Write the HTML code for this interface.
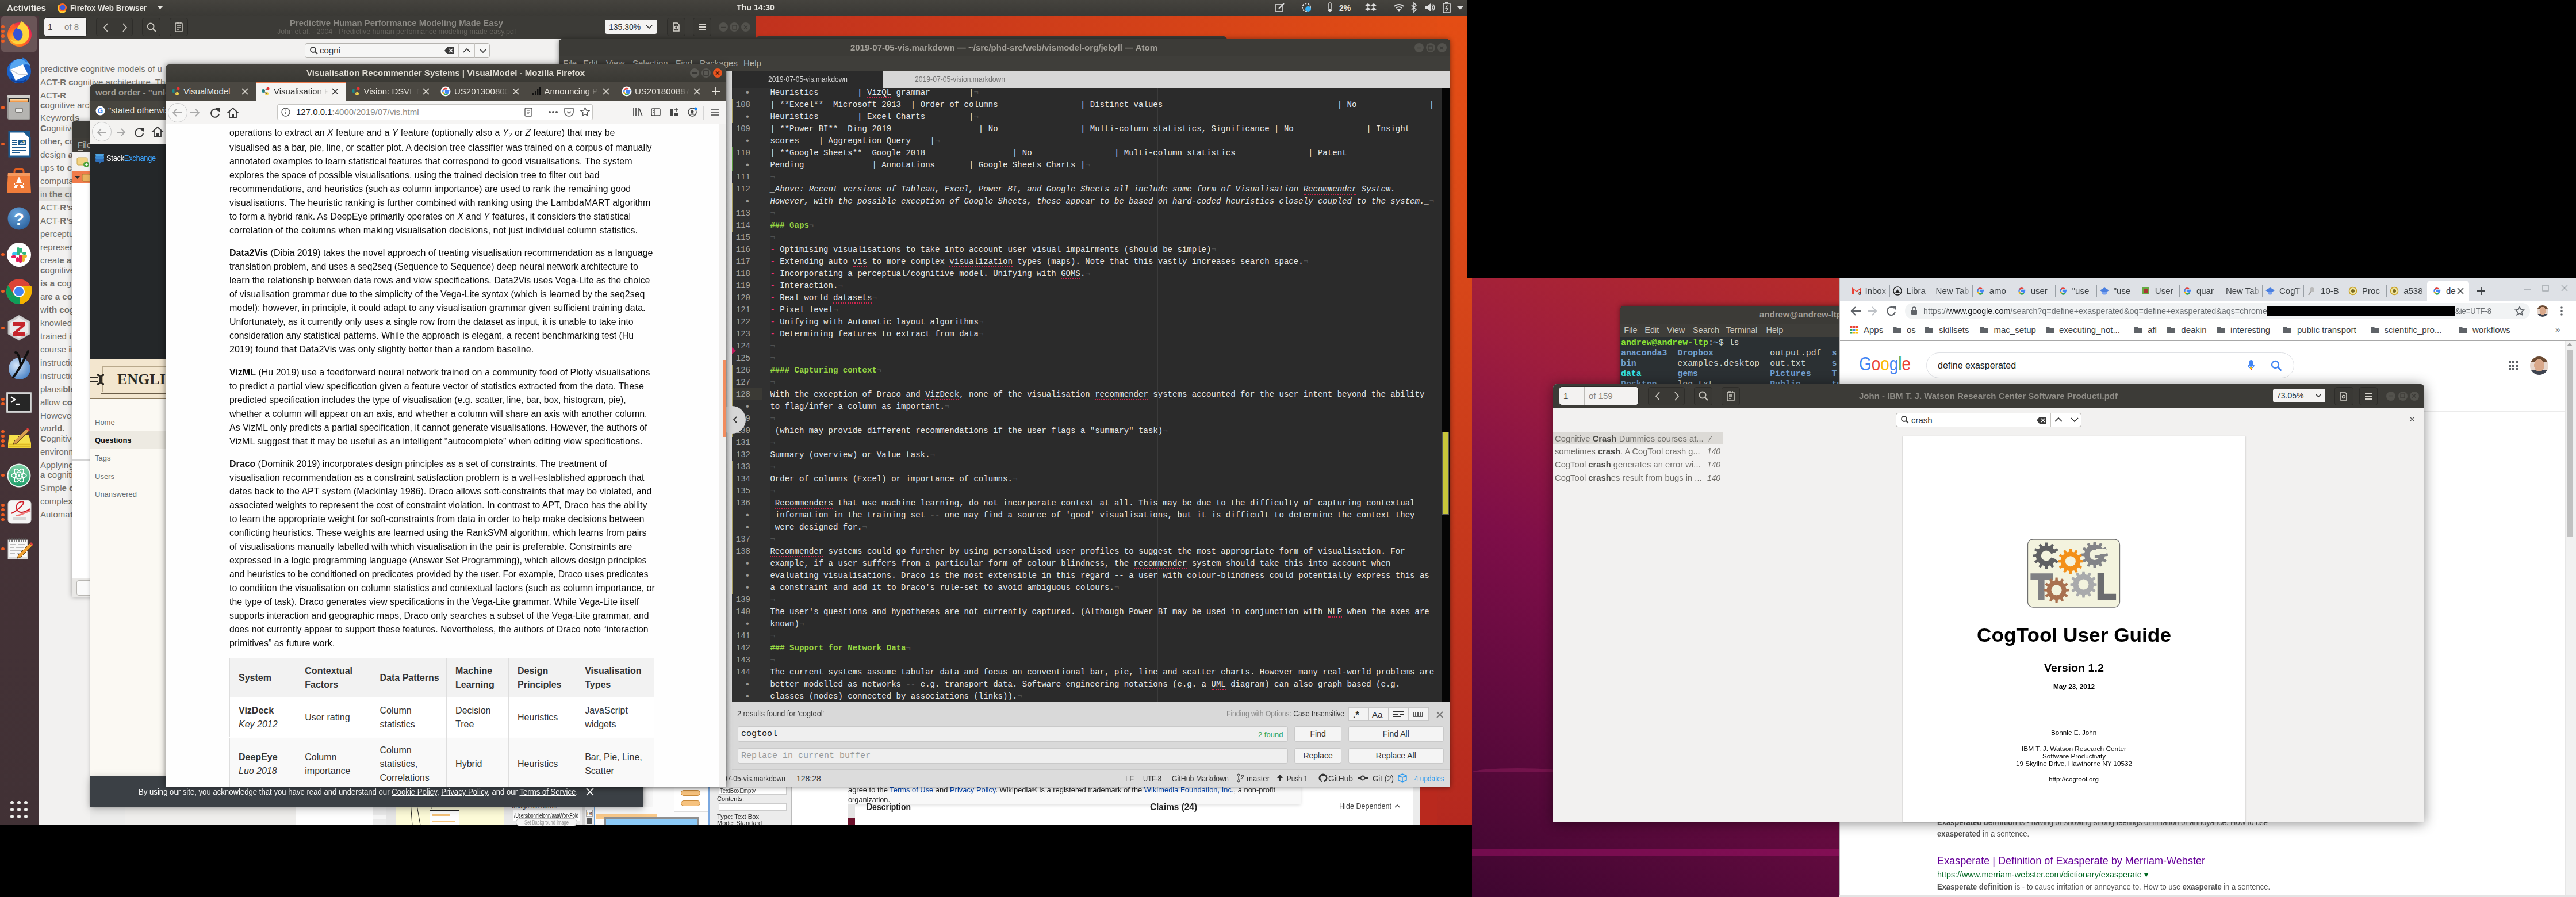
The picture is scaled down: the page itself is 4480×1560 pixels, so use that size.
<!DOCTYPE html><html><head><meta charset="utf-8"><style>*{margin:0;padding:0;box-sizing:border-box}
html,body{width:4480px;height:1560px;overflow:hidden;background:#000}
body{position:relative;font-family:"Liberation Sans",sans-serif}
body div,body svg{position:absolute}
body div span,body div b,body div i,body div em,body div u,body div sub{position:static}
.n{color:#4f4f4f;font-style:normal}
.h{color:#97d543}
.r{color:#f0307a}
sub{font-size:70%;vertical-align:-3px;line-height:0}
</style></head><body><div style="left:0px;top:0px;width:2551px;height:484px;background:linear-gradient(90deg,#b3281f 0%,#c0311e 50%,#e34e14 100%)"></div>
<div style="left:0px;top:484px;width:2560px;height:951px;background:#b9291e"></div>
<div style="left:2500px;top:27px;width:60px;height:1408px;background:linear-gradient(180deg,#e44d14 0%,#dc4a18 25%,#c83a1c 60%,#b5281f 100%)"></div>
<div style="left:2551px;top:0px;width:9px;height:484px;background:#000"></div>
<div style="left:67px;top:27px;width:1247px;height:1408px;background:#f2f1f0"></div>
<div style="left:67px;top:27px;width:1247px;height:40px;background:#3c3b37"></div>
<div style="left:67px;top:67px;width:1247px;height:1px;background:#fbfaf9"></div>
<div style="left:361px;top:107px;width:1px;height:8px;background:#cdcbc7"></div>
<div style="left:76px;top:30px;width:75px;height:34px;background:#f3f2f1;border-radius:5px;border:1px solid #2a2a28"></div>
<div style="left:104px;top:31px;width:1px;height:32px;background:#bdbcb8"></div>
<div style="left:83px;top:37.0px;font-size:15px;line-height:20px;color:#444;font-family:'Liberation Sans', sans-serif;white-space:pre;">1</div>
<div style="left:112px;top:37.0px;font-size:15px;line-height:20px;color:#8a8883;font-family:'Liberation Sans', sans-serif;white-space:pre;">of 8</div>
<div style="left:167px;top:31px;width:64px;height:32px;background:#3a3935;border:1px solid #2e2d2a;border-radius:4px"></div>
<div style="left:247px;top:31px;width:32px;height:32px;background:#3a3935;border:1px solid #2e2d2a;border-radius:4px"></div>
<div style="left:295px;top:31px;width:32px;height:32px;background:#3a3935;border:1px solid #2e2d2a;border-radius:4px"></div>
<svg style="left:176px;top:37px;" width="50" height="22" viewBox="0 0 50 22"><path d="M11 4 L5 11 L11 18" stroke="#c9c6bf" stroke-width="1.8" fill="none"/><path d="M38 4 L44 11 L38 18" stroke="#c9c6bf" stroke-width="1.8" fill="none"/></svg>
<svg style="left:254px;top:38px;" width="20" height="20" viewBox="0 0 20 20"><circle cx="8" cy="8" r="5.5" stroke="#c9c6bf" stroke-width="2" fill="none"/><path d="M12 12 L17 17" stroke="#c9c6bf" stroke-width="2.2"/></svg>
<svg style="left:303px;top:37px;" width="16" height="20" viewBox="0 0 16 20"><rect x="2" y="3" width="12" height="15" rx="1" stroke="#c9c6bf" stroke-width="1.6" fill="none"/><path d="M5 8h6M5 11h6M5 14h4M5 1v3M8 1v3M11 1v3" stroke="#c9c6bf" stroke-width="1.3"/></svg>
<div id="f1" style="left:503.9px;top:29.6px;font-size:15px;line-height:20px;color:#8a8883;font-family:'Liberation Sans', sans-serif;font-weight:bold;transform:scaleX(0.9912);transform-origin:0 0;white-space:pre;">Predictive Human Performance Modeling Made Easy</div>
<div id="f2" style="left:481.7px;top:46.3px;font-size:13.5px;line-height:18px;color:#67655f;font-family:'Liberation Sans', sans-serif;transform:scaleX(0.9231);transform-origin:0 0;white-space:pre;">John et al. - 2004 - Predictive human performance modeling made easy.pdf</div>
<div style="left:1052px;top:34px;width:91px;height:25px;background:#f4f3f2;border-radius:4px"></div>
<div style="left:1059px;top:38.0px;font-size:14px;line-height:18px;color:#333;font-family:'Liberation Sans', sans-serif;white-space:pre;">135.30%</div>
<svg style="left:1122px;top:41px;" width="14" height="12" viewBox="0 0 14 12"><path d="M2 3 L7 8 L12 3" stroke="#333" stroke-width="1.6" fill="none"/></svg>
<div style="left:1160px;top:31px;width:32px;height:32px;background:#3a3935;border:1px solid #2e2d2a;border-radius:4px"></div>
<div style="left:1205px;top:31px;width:32px;height:32px;background:#3a3935;border:1px solid #2e2d2a;border-radius:4px"></div>
<svg style="left:1213px;top:40px;" width="16" height="14" viewBox="0 0 16 14"><path d="M2 2h12M2 7h12M2 12h12" stroke="#d6d3cc" stroke-width="1.8"/></svg>
<svg style="left:1168px;top:38px;" width="16" height="18" viewBox="0 0 16 18"><path d="M3 2h7l3 3v11H3z" stroke="#d6d3cc" stroke-width="1.6" fill="none"/><circle cx="8" cy="10" r="2.5" stroke="#d6d3cc" stroke-width="1.4" fill="none"/></svg>
<div style="left:1250px;top:39px;width:16px;height:16px;border-radius:50%;background:#53524d"></div>
<div style="left:1269px;top:39px;width:16px;height:16px;border-radius:50%;background:#53524d"></div>
<div style="left:1289px;top:39px;width:16px;height:16px;border-radius:50%;background:#53524d"></div>
<svg style="left:1252px;top:41px;" width="52" height="13" viewBox="0 0 52 13"><path d="M2 6.5h8" stroke="#3a3935" stroke-width="1.4"/><rect x="22" y="3" width="7" height="7" stroke="#3a3935" stroke-width="1.2" fill="none"/><path d="M42 3.5l6 6M48 3.5l-6 6" stroke="#3a3935" stroke-width="1.3"/></svg>
<div style="left:530px;top:75px;width:322px;height:26px;background:#f6f6f5;border:1px solid #b6b4b0;border-radius:4px"></div>
<svg style="left:538px;top:80px;" width="16" height="16" viewBox="0 0 16 16"><circle cx="6.5" cy="6.5" r="4.5" stroke="#3a3a3a" stroke-width="1.8" fill="none"/><path d="M10 10 L14 14" stroke="#3a3a3a" stroke-width="2"/></svg>
<div style="left:556px;top:78.0px;font-size:15px;line-height:20px;color:#333;font-family:'Liberation Sans', sans-serif;white-space:pre;">cogni</div>
<svg style="left:773px;top:81px;" width="18" height="14" viewBox="0 0 18 14"><path d="M5 1h12v12H5L0 7z" fill="#3a3a3a"/><path d="M8 4l6 6M14 4l-6 6" stroke="#fff" stroke-width="1.5"/></svg>
<div style="left:797px;top:75px;width:1px;height:26px;background:#c6c4c0"></div>
<div style="left:825px;top:75px;width:1px;height:26px;background:#c6c4c0"></div>
<svg style="left:803px;top:82px;" width="18" height="12" viewBox="0 0 18 12"><path d="M3 9 L9 3 L15 9" stroke="#333" stroke-width="1.7" fill="none"/></svg>
<svg style="left:831px;top:82px;" width="18" height="12" viewBox="0 0 18 12"><path d="M3 3 L9 9 L15 3" stroke="#333" stroke-width="1.7" fill="none"/></svg>
<div style="left:67px;top:326px;width:294px;height:23px;background:#dfdedb"></div>
<div style="left:70px;top:109.8px;font-size:15px;line-height:20px;color:#716f6a;font-family:'Liberation Sans', sans-serif;white-space:pre;">predict<b>ive c</b>ognitive models of u</div>
<div style="left:70px;top:132.6px;font-size:15px;line-height:20px;color:#716f6a;font-family:'Liberation Sans', sans-serif;white-space:pre;">AC<b>T-R c</b>ognitive architecture. The</div>
<div style="left:70px;top:155.5px;font-size:15px;line-height:20px;color:#716f6a;font-family:'Liberation Sans', sans-serif;white-space:pre;">AC<b>T-R</b></div>
<div style="left:70px;top:172.9px;font-size:15px;line-height:20px;color:#716f6a;font-family:'Liberation Sans', sans-serif;white-space:pre;"><b>c</b>ognitive architecture</div>
<div style="left:70px;top:195.2px;font-size:15px;line-height:20px;color:#716f6a;font-family:'Liberation Sans', sans-serif;white-space:pre;">Keywo<b>rds</b></div>
<div style="left:70px;top:212.6px;font-size:15px;line-height:20px;color:#716f6a;font-family:'Liberation Sans', sans-serif;white-space:pre;"><b>C</b>ognitive</div>
<div style="left:70px;top:235.5px;font-size:15px;line-height:20px;color:#716f6a;font-family:'Liberation Sans', sans-serif;white-space:pre;">oth<b>er, c</b>ognitive</div>
<div style="left:70px;top:258.8px;font-size:15px;line-height:20px;color:#716f6a;font-family:'Liberation Sans', sans-serif;white-space:pre;">design <b>a</b>nd</div>
<div style="left:70px;top:281.7px;font-size:15px;line-height:20px;color:#716f6a;font-family:'Liberation Sans', sans-serif;white-space:pre;">ups <b>to c</b>ognitive</div>
<div style="left:70px;top:304.5px;font-size:15px;line-height:20px;color:#716f6a;font-family:'Liberation Sans', sans-serif;white-space:pre;">computational</div>
<div style="left:70px;top:327.9px;font-size:15px;line-height:20px;color:#716f6a;font-family:'Liberation Sans', sans-serif;white-space:pre;">in <b>the c</b>ognitive</div>
<div style="left:70px;top:350.7px;font-size:15px;line-height:20px;color:#716f6a;font-family:'Liberation Sans', sans-serif;white-space:pre;">ACT-<b>R’s c</b>ognitive</div>
<div style="left:70px;top:373.6px;font-size:15px;line-height:20px;color:#716f6a;font-family:'Liberation Sans', sans-serif;white-space:pre;">ACT-<b>R’s c</b>ognitive</div>
<div style="left:70px;top:396.5px;font-size:15px;line-height:20px;color:#716f6a;font-family:'Liberation Sans', sans-serif;white-space:pre;">perceptual</div>
<div style="left:70px;top:419.8px;font-size:15px;line-height:20px;color:#716f6a;font-family:'Liberation Sans', sans-serif;white-space:pre;">represe<b>nt c</b>ognitive</div>
<div style="left:70px;top:442.7px;font-size:15px;line-height:20px;color:#716f6a;font-family:'Liberation Sans', sans-serif;white-space:pre;">creat<b>e a</b></div>
<div style="left:70px;top:460.0px;font-size:15px;line-height:20px;color:#716f6a;font-family:'Liberation Sans', sans-serif;white-space:pre;"><b>c</b>ognitive</div>
<div style="left:70px;top:482.9px;font-size:15px;line-height:20px;color:#716f6a;font-family:'Liberation Sans', sans-serif;white-space:pre;"><b>is a c</b>ognitive</div>
<div style="left:70px;top:505.8px;font-size:15px;line-height:20px;color:#716f6a;font-family:'Liberation Sans', sans-serif;white-space:pre;">ar<b>e a co</b>gnitive</div>
<div style="left:70px;top:528.6px;font-size:15px;line-height:20px;color:#716f6a;font-family:'Liberation Sans', sans-serif;white-space:pre;">w<b>ith co</b>gnitive</div>
<div style="left:70px;top:551.5px;font-size:15px;line-height:20px;color:#716f6a;font-family:'Liberation Sans', sans-serif;white-space:pre;">knowledge</div>
<div style="left:70px;top:574.8px;font-size:15px;line-height:20px;color:#716f6a;font-family:'Liberation Sans', sans-serif;white-space:pre;">trained <b>i</b>n</div>
<div style="left:70px;top:597.7px;font-size:15px;line-height:20px;color:#716f6a;font-family:'Liberation Sans', sans-serif;white-space:pre;">course <b>i</b>n</div>
<div style="left:70px;top:620.6px;font-size:15px;line-height:20px;color:#716f6a;font-family:'Liberation Sans', sans-serif;white-space:pre;">instruction</div>
<div style="left:70px;top:643.9px;font-size:15px;line-height:20px;color:#716f6a;font-family:'Liberation Sans', sans-serif;white-space:pre;">instruction</div>
<div style="left:70px;top:666.8px;font-size:15px;line-height:20px;color:#716f6a;font-family:'Liberation Sans', sans-serif;white-space:pre;">plausi<b>bl</b>e</div>
<div style="left:70px;top:689.6px;font-size:15px;line-height:20px;color:#716f6a;font-family:'Liberation Sans', sans-serif;white-space:pre;">allow <b>co</b>gnitive</div>
<div style="left:70px;top:713.0px;font-size:15px;line-height:20px;color:#716f6a;font-family:'Liberation Sans', sans-serif;white-space:pre;">Howeve<b>r</b></div>
<div style="left:70px;top:735.3px;font-size:15px;line-height:20px;color:#716f6a;font-family:'Liberation Sans', sans-serif;white-space:pre;">wo<b>rld.</b></div>
<div style="left:70px;top:753.2px;font-size:15px;line-height:20px;color:#716f6a;font-family:'Liberation Sans', sans-serif;white-space:pre;"><b>C</b>ognitive</div>
<div style="left:70px;top:776.1px;font-size:15px;line-height:20px;color:#716f6a;font-family:'Liberation Sans', sans-serif;white-space:pre;">environment</div>
<div style="left:70px;top:799.0px;font-size:15px;line-height:20px;color:#716f6a;font-family:'Liberation Sans', sans-serif;white-space:pre;">Applyin<b>g</b></div>
<div style="left:70px;top:816.3px;font-size:15px;line-height:20px;color:#716f6a;font-family:'Liberation Sans', sans-serif;white-space:pre;"><b>a c</b>ognitive</div>
<div style="left:70px;top:838.7px;font-size:15px;line-height:20px;color:#716f6a;font-family:'Liberation Sans', sans-serif;white-space:pre;">Simpl<b>e c</b>ognitive</div>
<div style="left:70px;top:862.0px;font-size:15px;line-height:20px;color:#716f6a;font-family:'Liberation Sans', sans-serif;white-space:pre;">comple<b>x</b></div>
<div style="left:70px;top:884.9px;font-size:15px;line-height:20px;color:#716f6a;font-family:'Liberation Sans', sans-serif;white-space:pre;">Automa<b>t</b>ed</div>
<div style="left:1475px;top:1365px;width:995px;height:70px;background:#fff"></div>
<div style="left:2458px;top:1365px;width:12px;height:70px;background:#ececec"></div>
<div style="left:1475px;top:1365px;width:787px;height:33px;background:#f8f8f8;box-shadow:0 2px 6px rgba(0,0,0,.15)"></div>
<div id="f3" style="left:1475px;top:1366px;white-space:pre;font-size:13px;line-height:16px;color:#222;transform:scaleX(0.9929);transform-origin:0 0;">agree to the <span style="color:#0645ad">Terms of Use</span> and <span style="color:#0645ad">Privacy Policy</span>. Wikipedia® is a registered trademark of the <span style="color:#0645ad">Wikimedia Foundation, Inc.</span>, a non-profit</div>
<div id="f4" style="left:1475px;top:1381.5px;font-size:13px;line-height:17px;color:#222;font-family:'Liberation Sans', sans-serif;transform:scaleX(0.9805);transform-origin:0 0;white-space:pre;">organization.</div>
<div style="left:1475px;top:1398px;width:12px;height:24px;background:#e4e4e4"></div>
<div style="left:1475px;top:1422px;width:12px;height:13px;background:#6b0f2a"></div>
<div id="f5" style="left:1506.7px;top:1392.6px;font-size:17px;line-height:22px;color:#222;font-family:'Liberation Sans', sans-serif;font-weight:bold;transform:scaleX(0.8233);transform-origin:0 0;white-space:pre;">Description</div>
<div id="f6" style="left:1999.5px;top:1393.0px;font-size:17px;line-height:22px;color:#222;font-family:'Liberation Sans', sans-serif;font-weight:bold;transform:scaleX(0.9040);transform-origin:0 0;white-space:pre;">Claims (24)</div>
<div id="f7" style="left:2329px;top:1393.0px;font-size:14px;line-height:18px;color:#444;font-family:'Liberation Sans', sans-serif;transform:scaleX(0.8993);transform-origin:0 0;white-space:pre;">Hide Dependent</div>
<svg style="left:2425px;top:1398px;" width="10" height="7" viewBox="0 0 10 7"><path d="M1 6l4-4 4 4" stroke="#444" stroke-width="1.5" fill="none"/></svg>
<div style="left:157px;top:1368px;width:61px;height:67px;background:#ececeb"></div>
<div style="left:218px;top:1368px;width:297px;height:67px;background:#efeeec"></div>
<div style="left:514px;top:1368px;width:1px;height:67px;background:#bdbdbd"></div>
<div style="left:515px;top:1368px;width:134px;height:67px;background:#fefefe"></div>
<div style="left:649px;top:1368px;width:23px;height:67px;background:#ebebeb"></div>
<div style="left:649px;top:1417px;width:23px;height:8px;background:#f6f6f6;border-top:1px solid #ccc;border-bottom:1px solid #ccc"></div>
<div style="left:672px;top:1368px;width:17px;height:67px;background:#e6e6e6"></div>
<div style="left:689px;top:1368px;width:187px;height:67px;background:#fdfbd8"></div>
<svg style="left:689px;top:1395px;" width="187" height="40" viewBox="0 0 187 40"><path d="M25 0L28 40M35 0L42 40M60 0L61 12" stroke="#222" stroke-width="1"/></svg>
<div style="left:747px;top:1408px;width:52px;height:27px;background:#fff;border:1px solid #555;border-top:3px solid #222"></div>
<div style="left:752px;top:1416px;width:30px;height:3px;background:#f5c27a"></div>
<div style="left:752px;top:1428px;width:40px;height:2px;background:#f5c27a"></div>
<div style="left:876px;top:1368px;width:136px;height:67px;background:#e9e9e9"></div>
<div style="left:890px;top:1395.0px;font-size:11px;line-height:14px;color:#333;font-family:'Liberation Sans', sans-serif;white-space:pre;">Image file name:</div>
<div style="left:892px;top:1408px;width:117px;height:19px;background:#fff"></div>
<div id="f8" style="left:894px;top:1410.5px;font-size:11.5px;line-height:15px;color:#222;font-family:'Liberation Sans', sans-serif;transform:scaleX(0.6826);transform-origin:0 0;white-space:pre;">/Users/bonniejohn/aaaWorkFold</div>
<div style="left:897px;top:1423px;width:107px;height:14px;border:1px solid #bbb;border-radius:7px;background:#f6f6f6"></div>
<div id="f9" style="left:912px;top:1423.5px;font-size:10px;line-height:13px;color:#999;font-family:'Liberation Sans', sans-serif;transform:scaleX(0.7569);transform-origin:0 0;white-space:pre;">Set Background Image</div>
<div style="left:1012px;top:1368px;width:6px;height:67px;background:#d2d2d2"></div>
<div style="left:1018px;top:1368px;width:15px;height:67px;background:#ececec"></div>
<div style="left:1019px;top:1408px;width:12px;height:12px;background:#fff;border:1px solid #aaa"></div>
<div style="left:1020px;top:1409.5px;font-size:7px;line-height:9px;color:#222;font-family:'Liberation Sans', sans-serif;white-space:pre;">Txt</div>
<div style="left:1020px;top:1423px;width:10px;height:10px;background:#555"></div>
<div style="left:1033px;top:1368px;width:2px;height:67px;background:#6aa0d8"></div>
<div style="left:1035px;top:1368px;width:197px;height:67px;background:#fbfbfb"></div>
<div style="left:1035px;top:1368px;width:100px;height:36px;background:linear-gradient(90deg,#f4f4f4,#e6e6e6 50%,#f6f6f6)"></div>
<div style="left:1172px;top:1368px;width:60px;height:44px;background:#fff;border:1px solid #ddd"></div>
<div style="left:1184px;top:1374px;width:34px;height:10px;background:#f6c27e;border-radius:5px;border:1px solid #c98a3a"></div>
<div style="left:1184px;top:1392px;width:34px;height:10px;background:#f6c27e;border-radius:5px;border:1px solid #c98a3a"></div>
<div style="left:1035px;top:1412px;width:197px;height:1px;background:#ccc"></div>
<div style="left:1037px;top:1415px;width:106px;height:9px;background:#f9c98a"></div>
<div style="left:1051px;top:1421px;width:164px;height:14px;background:#8ccaf8;border:3px solid #8f8f8f;border-bottom:0"></div>
<div style="left:1232px;top:1368px;width:2px;height:67px;background:#7aa8e0"></div>
<div style="left:1235px;top:1368px;width:140px;height:67px;background:#ececec"></div>
<div style="left:1250px;top:1368px;width:118px;height:14px;background:#fff;border:1px solid #ccc"></div>
<div id="f10" style="left:1252px;top:1368.0px;font-size:11px;line-height:14px;color:#333;font-family:'Liberation Sans', sans-serif;transform:scaleX(0.8818);transform-origin:0 0;white-space:pre;">TextBoxEmpty</div>
<div id="f11" style="left:1247px;top:1382.0px;font-size:11px;line-height:14px;color:#222;font-family:'Liberation Sans', sans-serif;transform:scaleX(0.9980);transform-origin:0 0;white-space:pre;">Contents:</div>
<div style="left:1250px;top:1397px;width:118px;height:13px;background:#fff;border:1px solid #ccc"></div>
<div id="f12" style="left:1247px;top:1413.0px;font-size:11px;line-height:14px;color:#222;font-family:'Liberation Sans', sans-serif;transform:scaleX(1.0145);transform-origin:0 0;white-space:pre;">Type: Text Box</div>
<div id="f13" style="left:1247px;top:1424.0px;font-size:11px;line-height:14px;color:#222;font-family:'Liberation Sans', sans-serif;transform:scaleX(0.9964);transform-origin:0 0;white-space:pre;">Mode: Standard</div>
<div style="left:1375px;top:1368px;width:2px;height:67px;background:#bbb"></div>
<div style="left:1377px;top:1368px;width:98px;height:67px;background:#fff"></div>
<div style="left:125px;top:210px;width:200px;height:828px;background:#fff;border-radius:6px 6px 0 0;box-shadow:0 0 8px rgba(0,0,0,.35)"></div>
<div style="left:125px;top:210px;width:200px;height:30px;background:#3c3b37;border-radius:6px 6px 0 0"></div>
<div style="left:125px;top:240px;width:200px;height:25px;background:#3f3d38"></div>
<div style="left:135px;top:242.0px;font-size:15px;line-height:20px;color:#bdbab2;font-family:'Liberation Sans', sans-serif;white-space:pre;">File</div>
<div style="left:135px;top:261px;width:9px;height:1px;background:#bdbab2"></div>
<div style="left:125px;top:265px;width:200px;height:33px;background:#f2f1f0"></div>
<svg style="left:133px;top:270px;" width="24" height="22" viewBox="0 0 24 22"><rect x="1" y="4" width="18" height="13" rx="2" fill="#f2d383" stroke="#c9a448"/><circle cx="17" cy="16" r="5" fill="#4ca33c"/><path d="M14 16h6M17 13v6" stroke="#fff" stroke-width="1.6"/></svg>
<div style="left:125px;top:298px;width:200px;height:20px;background:#f07b4b"></div>
<svg style="left:129px;top:302px;" width="30" height="14" viewBox="0 0 30 14"><path d="M1 4h9l-4.5 5z" fill="#2c2c2c"/><rect x="14" y="1" width="14" height="12" rx="2" fill="#e9b15e" stroke="#a7772e"/></svg>
<div style="left:125px;top:799px;width:32px;height:2px;background:#d5d5d5"></div>
<div style="left:125px;top:1005px;width:200px;height:33px;background:#e9e8e6"></div>
<div style="left:133px;top:1009px;width:40px;height:27px;background:#fafafa;border:1px solid #b9b7b3;border-radius:4px"></div>
<div style="left:157px;top:146px;width:962px;height:1257px;background:#fbf9f3;box-shadow:0 0 6px rgba(0,0,0,.25);border-radius:6px 6px 0 0"></div>
<div style="left:157px;top:146px;width:962px;height:30px;background:#3c3b37;border-radius:6px 6px 0 0"></div>
<div style="left:166px;top:151.0px;font-size:15px;line-height:20px;color:#9f9d96;font-family:'Liberation Sans', sans-serif;font-weight:bold;white-space:pre;">word order - &quot;unless stated otherwise&quot;</div>
<div style="left:157px;top:176px;width:962px;height:32px;background:#47453f"></div>
<svg style="left:166px;top:184px;" width="17" height="17" viewBox="0 0 17 17"><circle cx="8.5" cy="8.5" r="8" fill="#fff"/><text x="8.5" y="13" font-size="12" font-weight="bold" text-anchor="middle" fill="#4285f4" font-family="Liberation Sans">G</text></svg>
<div style="left:188px;top:182.0px;font-size:15px;line-height:20px;color:#e6e3dc;font-family:'Liberation Sans', sans-serif;white-space:pre;">&quot;stated otherwise&quot;</div>
<div style="left:157px;top:208px;width:962px;height:42px;background:#f3f2f0"></div>
<div style="left:160px;top:212px;width:34px;height:34px;border-radius:50%;border:1px solid #c8c8c8;background:#f6f6f5"></div>
<svg style="left:167px;top:221px;" width="60" height="18" viewBox="0 0 60 18"><path d="M17 9H4M9 3L3 9l6 6" stroke="#a8a8a8" stroke-width="1.8" fill="none"/><path d="M36 9h14M44 3l6 6-6 6" stroke="#a8a8a8" stroke-width="1.8" fill="none"/></svg>
<svg style="left:232px;top:219px;" width="20" height="20" viewBox="0 0 20 20"><path d="M16 8a7 7 0 1 0 1 5" stroke="#3a3a3a" stroke-width="2" fill="none"/><path d="M11 3h7v7z" fill="#3a3a3a"/></svg>
<svg style="left:263px;top:219px;" width="22" height="22" viewBox="0 0 22 22"><path d="M11 2l9 8h-3v9H5v-9H2z" stroke="#3a3a3a" stroke-width="1.8" fill="none"/><rect x="9" y="13" width="4" height="6" fill="#3a3a3a"/></svg>
<div style="left:157px;top:250px;width:962px;height:374px;background:#242729"></div>
<svg style="left:165px;top:266px;" width="18" height="20" viewBox="0 0 18 20"><rect x="1" y="1" width="15" height="4" rx="1.5" fill="#4fa3e0"/><rect x="1" y="6" width="15" height="4" rx="1" fill="#3a8ad2"/><rect x="1" y="11" width="15" height="4" rx="1" fill="#2f6fb8"/><path d="M8 15l0 4 4-4z" fill="#2f6fb8"/></svg>
<div id="f14" style="left:185px;top:264px;white-space:pre;font-size:15px;line-height:22px;letter-spacing:-0.3px;transform:scaleX(0.8571);transform-origin:0 0;"><span style="color:#fff">Stack</span><span style="color:#3ca4ff">Exchange</span></div>
<div style="left:157px;top:624px;width:962px;height:70px;background:#f3e6cf;border-bottom:2px solid #8d7b5e"></div>
<div style="left:175px;top:634px;width:800px;height:51px;border:1px solid #6b5d48;box-shadow:inset 0 0 0 2px #f3e6cf, inset 0 0 0 3px #b9a98c"></div>
<svg style="left:157px;top:646px;" width="32" height="28" viewBox="0 0 32 28"><path d="M0 11h14M0 17h14" stroke="#2e2a24" stroke-width="2"/><path d="M12 6c4 0 6 3 6 8s-2 8-6 8M24 6c-4 0-6 3-6 8s2 8 6 8" stroke="#2e2a24" stroke-width="3" fill="none"/><circle cx="18" cy="14" r="3" fill="#2e2a24"/></svg>
<div style="left:204px;top:642.5px;font-size:26px;line-height:34px;color:#2e2a24;font-family:'Liberation Serif', serif;font-weight:bold;letter-spacing:5pxwhite-space:pre;">ENGLISH LANGUAGE</div>
<div style="left:157px;top:750px;width:131px;height:31px;background:#edeae2"></div>
<div style="left:165px;top:725.9px;font-size:13px;line-height:17px;color:#6a6a6a;font-family:'Liberation Sans', sans-serif;white-space:pre;">Home</div>
<div style="left:165px;top:757.2px;font-size:13px;line-height:17px;color:#111;font-family:'Liberation Sans', sans-serif;font-weight:bold;white-space:pre;">Questions</div>
<div style="left:165px;top:788.0px;font-size:13px;line-height:17px;color:#6a6a6a;font-family:'Liberation Sans', sans-serif;white-space:pre;">Tags</div>
<div style="left:165px;top:819.8px;font-size:13px;line-height:17px;color:#6a6a6a;font-family:'Liberation Sans', sans-serif;white-space:pre;">Users</div>
<div style="left:165px;top:851.1px;font-size:13px;line-height:17px;color:#6a6a6a;font-family:'Liberation Sans', sans-serif;white-space:pre;">Unanswered</div>
<div style="left:157px;top:1350px;width:962px;height:53px;background:#3b4045;box-shadow:0 4px 14px rgba(0,0,0,.25)"></div>
<div id="f15" style="left:241px;top:1368px;white-space:pre;font-size:14px;line-height:18px;color:#fff;transform:scaleX(0.9395);transform-origin:0 0;">By using our site, you acknowledge that you have read and understand our <u>Cookie Policy</u>, <u>Privacy Policy</u>, and our <u>Terms of Service</u>.</div>
<svg style="left:1018px;top:1369px;" width="16" height="16" viewBox="0 0 16 16"><path d="M2 2l12 12M14 2L2 14" stroke="#fff" stroke-width="2"/></svg>
<div style="left:1314px;top:63px;width:820px;height:8px;background:#3c3b37;border-radius:6px 6px 0 0"></div>
<div style="left:972px;top:68px;width:1550px;height:1301px;background:#2b2b2b;border-radius:6px 6px 0 0;box-shadow:0 0 10px rgba(0,0,0,.45)"></div>
<div style="left:972px;top:68px;width:1550px;height:30px;background:#3c3b37;border-radius:6px 6px 0 0"></div>
<div id="f16" style="left:1479.0px;top:73.0px;font-size:15px;line-height:20px;color:#a29f98;font-family:'Liberation Sans', sans-serif;font-weight:bold;transform:scaleX(0.9996);transform-origin:0 0;white-space:pre;">2019-07-05-vis.markdown — ~/src/phd-src/web/vismodel-org/jekyll — Atom</div>
<div style="left:2460px;top:75px;width:16px;height:16px;border-radius:50%;background:#53524d"></div>
<div style="left:2480px;top:75px;width:16px;height:16px;border-radius:50%;background:#53524d"></div>
<div style="left:2500px;top:75px;width:16px;height:16px;border-radius:50%;background:#53524d"></div>
<svg style="left:2462px;top:77px;" width="52" height="13" viewBox="0 0 52 13"><path d="M2 6.5h8" stroke="#3a3935" stroke-width="1.4"/><rect x="22" y="3" width="7" height="7" stroke="#3a3935" stroke-width="1.2" fill="none"/><path d="M42 3.5l6 6M48 3.5l-6 6" stroke="#3a3935" stroke-width="1.3"/></svg>
<div style="left:972px;top:98px;width:1550px;height:25px;background:#3f3e3a"></div>
<div style="left:979px;top:100.0px;font-size:15px;line-height:20px;color:#b9b6ae;font-family:'Liberation Sans', sans-serif;white-space:pre;">File</div>
<div style="left:1014px;top:100.0px;font-size:15px;line-height:20px;color:#b9b6ae;font-family:'Liberation Sans', sans-serif;white-space:pre;">Edit</div>
<div style="left:1054px;top:100.0px;font-size:15px;line-height:20px;color:#b9b6ae;font-family:'Liberation Sans', sans-serif;white-space:pre;">View</div>
<div style="left:1100px;top:100.0px;font-size:15px;line-height:20px;color:#b9b6ae;font-family:'Liberation Sans', sans-serif;white-space:pre;">Selection</div>
<div style="left:1175px;top:100.0px;font-size:15px;line-height:20px;color:#b9b6ae;font-family:'Liberation Sans', sans-serif;white-space:pre;">Find</div>
<div style="left:1217px;top:100.0px;font-size:15px;line-height:20px;color:#b9b6ae;font-family:'Liberation Sans', sans-serif;white-space:pre;">Packages</div>
<div style="left:1293px;top:100.0px;font-size:15px;line-height:20px;color:#b9b6ae;font-family:'Liberation Sans', sans-serif;white-space:pre;">Help</div>
<div style="left:972px;top:123px;width:1550px;height:30px;background:#d7d7d7"></div>
<div style="left:1273px;top:123px;width:263px;height:30px;background:#2b2b2b"></div>
<div id="f17" style="left:1336.0px;top:129.0px;font-size:13px;line-height:17px;color:#d6d6d6;font-family:'Liberation Sans', sans-serif;transform:scaleX(0.9182);transform-origin:0 0;white-space:pre;">2019-07-05-vis.markdown</div>
<div id="f18" style="left:1590.5px;top:129.0px;font-size:13px;line-height:17px;color:#707070;font-family:'Liberation Sans', sans-serif;transform:scaleX(0.9364);transform-origin:0 0;white-space:pre;">2019-07-05-vision.markdown</div>
<div style="left:1801px;top:123px;width:1px;height:30px;background:#bdbdbd"></div>
<div style="left:1262px;top:123px;width:11px;height:1246px;background:linear-gradient(90deg,#a9a9a9,#d3d3d3 40%,#dcdcdc)"></div>
<div style="left:1273px;top:153px;width:66px;height:1067px;background:#313131"></div>
<div style="left:2507px;top:153px;width:15px;height:1067px;background:#050505"></div>
<div style="left:2508px;top:751px;width:12px;height:144px;background:#c8c63a;border:1px solid #555"></div>
<div style="left:2013px;top:153px;width:1px;height:1067px;background:#3b3b3b"></div>
<div style="left:1273px;top:171.5px;width:2.3px;height:42px;background:#a89e5c"></div>
<div style="left:1273px;top:255.5px;width:2.3px;height:42px;background:#5a9a3c"></div>
<div style="left:1273px;top:318.5px;width:2.3px;height:84px;background:#a89e5c"></div>
<div style="left:1273px;top:633.5px;width:2.3px;height:126px;background:#a89e5c"></div>
<div style="left:1273px;top:801.5px;width:2.3px;height:231px;background:#a89e5c"></div>
<div style="left:1275px;top:674.5px;width:50px;height:21px;background:#3b3a35"></div>
<svg style="left:1273px;top:604px;" width="8" height="12" viewBox="0 0 8 12"><path d="M0 0L7 6L0 12z" fill="#c2185b"/></svg>
<div style="left:0;top:0;font-family:'Liberation Mono',monospace;font-size:14.05px;line-height:21px"><div style="left:1275px;top:150.8px;width:30px;height:21px;color:#9a9a9a;text-align:right;padding-right:0px;font-size:17px">•</div>
<div style="left:1339.4px;top:150.8px;height:21px;color:#e6e6e6;white-space:pre">Heuristics        | VizQL grammar        |<i class="n">¬</i></div>
<div style="left:1270px;top:171.8px;width:35px;height:21px;color:#a3a3a3;text-align:right">108</div>
<div style="left:1339.4px;top:171.8px;height:21px;color:#e6e6e6;white-space:pre">| **Excel** _Microsoft 2013_ | Order of columns                 | Distinct values                                    | No               |</div>
<div style="left:1275px;top:192.8px;width:30px;height:21px;color:#9a9a9a;text-align:right;padding-right:0px;font-size:17px">•</div>
<div style="left:1339.4px;top:192.8px;height:21px;color:#e6e6e6;white-space:pre">Heuristics        | Excel Charts         |<i class="n">¬</i></div>
<div style="left:1270px;top:213.8px;width:35px;height:21px;color:#a3a3a3;text-align:right">109</div>
<div style="left:1339.4px;top:213.8px;height:21px;color:#e6e6e6;white-space:pre">| **Power BI** _Ding 2019_                 | No                 | Multi-column statistics, Significance | No               | Insight</div>
<div style="left:1275px;top:234.8px;width:30px;height:21px;color:#9a9a9a;text-align:right;padding-right:0px;font-size:17px">•</div>
<div style="left:1339.4px;top:234.8px;height:21px;color:#e6e6e6;white-space:pre">scores    | Aggregation Query    |<i class="n">¬</i></div>
<div style="left:1270px;top:255.8px;width:35px;height:21px;color:#a3a3a3;text-align:right">110</div>
<div style="left:1339.4px;top:255.8px;height:21px;color:#e6e6e6;white-space:pre">| **Google Sheets** _Google 2018_                 | No                 | Multi-column statistics               | Patent</div>
<div style="left:1275px;top:276.8px;width:30px;height:21px;color:#9a9a9a;text-align:right;padding-right:0px;font-size:17px">•</div>
<div style="left:1339.4px;top:276.8px;height:21px;color:#e6e6e6;white-space:pre">Pending              | Annotations       | Google Sheets Charts |<i class="n">¬</i></div>
<div style="left:1270px;top:297.8px;width:35px;height:21px;color:#a3a3a3;text-align:right">111</div>
<div style="left:1339.4px;top:297.8px;height:21px;color:#e6e6e6;white-space:pre"><i class="n">¬</i></div>
<div style="left:1270px;top:318.8px;width:35px;height:21px;color:#a3a3a3;text-align:right">112</div>
<div style="left:1339.4px;top:318.8px;height:21px;color:#e6e6e6;white-space:pre"><em>_Above: Recent versions of Tableau, Excel, Power BI, and Google Sheets all include some form of Visualisation Recommender System.</em></div>
<div style="left:1275px;top:339.8px;width:30px;height:21px;color:#9a9a9a;text-align:right;padding-right:0px;font-size:17px">•</div>
<div style="left:1339.4px;top:339.8px;height:21px;color:#e6e6e6;white-space:pre"><em>However, with the possible exception of Google Sheets, these appear to be based on hard-coded heuristics closely coupled to the system._<i class="n">¬</i></em></div>
<div style="left:1270px;top:360.8px;width:35px;height:21px;color:#a3a3a3;text-align:right">113</div>
<div style="left:1339.4px;top:360.8px;height:21px;color:#e6e6e6;white-space:pre"><i class="n">¬</i></div>
<div style="left:1270px;top:381.8px;width:35px;height:21px;color:#a3a3a3;text-align:right">114</div>
<div style="left:1339.4px;top:381.8px;height:21px;color:#e6e6e6;white-space:pre"><b class="h">### Gaps<i class="n">¬</i></b></div>
<div style="left:1270px;top:402.8px;width:35px;height:21px;color:#a3a3a3;text-align:right">115</div>
<div style="left:1339.4px;top:402.8px;height:21px;color:#e6e6e6;white-space:pre"><i class="n">¬</i></div>
<div style="left:1270px;top:423.8px;width:35px;height:21px;color:#a3a3a3;text-align:right">116</div>
<div style="left:1339.4px;top:423.8px;height:21px;color:#e6e6e6;white-space:pre"><span class="r">-</span> Optimising visualisations to take into account user visual impairments (should be simple)<i class="n">¬</i></div>
<div style="left:1270px;top:444.8px;width:35px;height:21px;color:#a3a3a3;text-align:right">117</div>
<div style="left:1339.4px;top:444.8px;height:21px;color:#e6e6e6;white-space:pre"><span class="r">-</span> Extending auto vis to more complex visualization types (maps). Note that this vastly increases search space.<i class="n">¬</i></div>
<div style="left:1270px;top:465.8px;width:35px;height:21px;color:#a3a3a3;text-align:right">118</div>
<div style="left:1339.4px;top:465.8px;height:21px;color:#e6e6e6;white-space:pre"><span class="r">-</span> Incorporating a perceptual/cognitive model. Unifying with GOMS.<i class="n">¬</i></div>
<div style="left:1270px;top:486.8px;width:35px;height:21px;color:#a3a3a3;text-align:right">119</div>
<div style="left:1339.4px;top:486.8px;height:21px;color:#e6e6e6;white-space:pre"><span class="r">-</span> Interaction.<i class="n">¬</i></div>
<div style="left:1270px;top:507.8px;width:35px;height:21px;color:#a3a3a3;text-align:right">120</div>
<div style="left:1339.4px;top:507.8px;height:21px;color:#e6e6e6;white-space:pre"><span class="r">-</span> Real world datasets<i class="n">¬</i></div>
<div style="left:1270px;top:528.8px;width:35px;height:21px;color:#a3a3a3;text-align:right">121</div>
<div style="left:1339.4px;top:528.8px;height:21px;color:#e6e6e6;white-space:pre"><span class="r">-</span> Pixel level<i class="n">¬</i></div>
<div style="left:1270px;top:549.8px;width:35px;height:21px;color:#a3a3a3;text-align:right">122</div>
<div style="left:1339.4px;top:549.8px;height:21px;color:#e6e6e6;white-space:pre"><span class="r">-</span> Unifying with Automatic layout algorithms<i class="n">¬</i></div>
<div style="left:1270px;top:570.8px;width:35px;height:21px;color:#a3a3a3;text-align:right">123</div>
<div style="left:1339.4px;top:570.8px;height:21px;color:#e6e6e6;white-space:pre"><span class="r">-</span> Determining features to extract from data<i class="n">¬</i></div>
<div style="left:1270px;top:591.8px;width:35px;height:21px;color:#a3a3a3;text-align:right">124</div>
<div style="left:1339.4px;top:591.8px;height:21px;color:#e6e6e6;white-space:pre"><i class="n">¬</i></div>
<div style="left:1270px;top:612.8px;width:35px;height:21px;color:#a3a3a3;text-align:right">125</div>
<div style="left:1339.4px;top:612.8px;height:21px;color:#e6e6e6;white-space:pre"><i class="n">¬</i></div>
<div style="left:1270px;top:633.8px;width:35px;height:21px;color:#a3a3a3;text-align:right">126</div>
<div style="left:1339.4px;top:633.8px;height:21px;color:#e6e6e6;white-space:pre"><b class="h">#### Capturing context<i class="n">¬</i></b></div>
<div style="left:1270px;top:654.8px;width:35px;height:21px;color:#a3a3a3;text-align:right">127</div>
<div style="left:1339.4px;top:654.8px;height:21px;color:#e6e6e6;white-space:pre"><i class="n">¬</i></div>
<div style="left:1270px;top:675.8px;width:35px;height:21px;color:#a3a3a3;text-align:right">128</div>
<div style="left:1339.4px;top:675.8px;height:21px;color:#e6e6e6;white-space:pre">With the exception of Draco and VizDeck, none of the visualisation recommender systems accounted for the user intent beyond the ability</div>
<div style="left:1275px;top:696.8px;width:30px;height:21px;color:#9a9a9a;text-align:right;padding-right:0px;font-size:17px">•</div>
<div style="left:1339.4px;top:696.8px;height:21px;color:#e6e6e6;white-space:pre">to flag/infer a column as important.<i class="n">¬</i></div>
<div style="left:1270px;top:717.8px;width:35px;height:21px;color:#a3a3a3;text-align:right">129</div>
<div style="left:1339.4px;top:717.8px;height:21px;color:#e6e6e6;white-space:pre"><i class="n">¬</i></div>
<div style="left:1270px;top:738.8px;width:35px;height:21px;color:#a3a3a3;text-align:right">130</div>
<div style="left:1339.4px;top:738.8px;height:21px;color:#e6e6e6;white-space:pre"> (which may provide different recommendations if the user flags a &quot;summary&quot; task)<i class="n">¬</i></div>
<div style="left:1270px;top:759.8px;width:35px;height:21px;color:#a3a3a3;text-align:right">131</div>
<div style="left:1339.4px;top:759.8px;height:21px;color:#e6e6e6;white-space:pre"><i class="n">¬</i></div>
<div style="left:1270px;top:780.8px;width:35px;height:21px;color:#a3a3a3;text-align:right">132</div>
<div style="left:1339.4px;top:780.8px;height:21px;color:#e6e6e6;white-space:pre">Summary (overview) or Value task.<i class="n">¬</i></div>
<div style="left:1270px;top:801.8px;width:35px;height:21px;color:#a3a3a3;text-align:right">133</div>
<div style="left:1339.4px;top:801.8px;height:21px;color:#e6e6e6;white-space:pre"><i class="n">¬</i></div>
<div style="left:1270px;top:822.8px;width:35px;height:21px;color:#a3a3a3;text-align:right">134</div>
<div style="left:1339.4px;top:822.8px;height:21px;color:#e6e6e6;white-space:pre">Order of columns (Excel) or importance of columns.<i class="n">¬</i></div>
<div style="left:1270px;top:843.8px;width:35px;height:21px;color:#a3a3a3;text-align:right">135</div>
<div style="left:1339.4px;top:843.8px;height:21px;color:#e6e6e6;white-space:pre"><i class="n">¬</i></div>
<div style="left:1270px;top:864.8px;width:35px;height:21px;color:#a3a3a3;text-align:right">136</div>
<div style="left:1339.4px;top:864.8px;height:21px;color:#e6e6e6;white-space:pre"> Recommenders that use machine learning, do not incorporate context at all. This may be due to the difficulty of capturing contextual</div>
<div style="left:1275px;top:885.8px;width:30px;height:21px;color:#9a9a9a;text-align:right;padding-right:0px;font-size:17px">•</div>
<div style="left:1339.4px;top:885.8px;height:21px;color:#e6e6e6;white-space:pre"> information in the training set -- one may find a source of &#x27;good&#x27; visualisations, but it is difficult to determine the context they</div>
<div style="left:1275px;top:906.8px;width:30px;height:21px;color:#9a9a9a;text-align:right;padding-right:0px;font-size:17px">•</div>
<div style="left:1339.4px;top:906.8px;height:21px;color:#e6e6e6;white-space:pre"> were designed for.<i class="n">¬</i></div>
<div style="left:1270px;top:927.8px;width:35px;height:21px;color:#a3a3a3;text-align:right">137</div>
<div style="left:1339.4px;top:927.8px;height:21px;color:#e6e6e6;white-space:pre"><i class="n">¬</i></div>
<div style="left:1270px;top:948.8px;width:35px;height:21px;color:#a3a3a3;text-align:right">138</div>
<div style="left:1339.4px;top:948.8px;height:21px;color:#e6e6e6;white-space:pre">Recommender systems could go further by using personalised user profiles to suggest the most appropriate form of visualisation. For</div>
<div style="left:1275px;top:969.8px;width:30px;height:21px;color:#9a9a9a;text-align:right;padding-right:0px;font-size:17px">•</div>
<div style="left:1339.4px;top:969.8px;height:21px;color:#e6e6e6;white-space:pre">example, if a user suffers from a particular form of colour blindness, the recommender system should take this into account when</div>
<div style="left:1275px;top:990.8px;width:30px;height:21px;color:#9a9a9a;text-align:right;padding-right:0px;font-size:17px">•</div>
<div style="left:1339.4px;top:990.8px;height:21px;color:#e6e6e6;white-space:pre">evaluating visualisations. Draco is the most extensible in this regard -- a user with colour-blindness could potentially express this as</div>
<div style="left:1275px;top:1011.8px;width:30px;height:21px;color:#9a9a9a;text-align:right;padding-right:0px;font-size:17px">•</div>
<div style="left:1339.4px;top:1011.8px;height:21px;color:#e6e6e6;white-space:pre">a constraint and add it to Draco&#x27;s rule-set to avoid ambiguous colours.<i class="n">¬</i></div>
<div style="left:1270px;top:1032.8px;width:35px;height:21px;color:#a3a3a3;text-align:right">139</div>
<div style="left:1339.4px;top:1032.8px;height:21px;color:#e6e6e6;white-space:pre"><i class="n">¬</i></div>
<div style="left:1270px;top:1053.8px;width:35px;height:21px;color:#a3a3a3;text-align:right">140</div>
<div style="left:1339.4px;top:1053.8px;height:21px;color:#e6e6e6;white-space:pre">The user&#x27;s questions and hypotheses are not currently captured. (Although Power BI may be used in conjunction with NLP when the axes are</div>
<div style="left:1275px;top:1074.8px;width:30px;height:21px;color:#9a9a9a;text-align:right;padding-right:0px;font-size:17px">•</div>
<div style="left:1339.4px;top:1074.8px;height:21px;color:#e6e6e6;white-space:pre">known)<i class="n">¬</i></div>
<div style="left:1270px;top:1095.8px;width:35px;height:21px;color:#a3a3a3;text-align:right">141</div>
<div style="left:1339.4px;top:1095.8px;height:21px;color:#e6e6e6;white-space:pre"><i class="n">¬</i></div>
<div style="left:1270px;top:1116.8px;width:35px;height:21px;color:#a3a3a3;text-align:right">142</div>
<div style="left:1339.4px;top:1116.8px;height:21px;color:#e6e6e6;white-space:pre"><b class="h">### Support for Network Data<i class="n">¬</i></b></div>
<div style="left:1270px;top:1137.8px;width:35px;height:21px;color:#a3a3a3;text-align:right">143</div>
<div style="left:1339.4px;top:1137.8px;height:21px;color:#e6e6e6;white-space:pre"><i class="n">¬</i></div>
<div style="left:1270px;top:1158.8px;width:35px;height:21px;color:#a3a3a3;text-align:right">144</div>
<div style="left:1339.4px;top:1158.8px;height:21px;color:#e6e6e6;white-space:pre">The current systems assume tabular data and focus on conventional bar, pie, line and scatter charts. However many real-world problems are</div>
<div style="left:1275px;top:1179.8px;width:30px;height:21px;color:#9a9a9a;text-align:right;padding-right:0px;font-size:17px">•</div>
<div style="left:1339.4px;top:1179.8px;height:21px;color:#e6e6e6;white-space:pre">better modelled as networks -- e.g. transport data. Software engineering notations (e.g. a UML diagram) can also graph based (e.g.</div>
<div style="left:1275px;top:1200.8px;width:30px;height:21px;color:#9a9a9a;text-align:right;padding-right:0px;font-size:17px">•</div>
<div style="left:1339.4px;top:1200.8px;height:21px;color:#e6e6e6;white-space:pre">classes (nodes) connected by associations (links)).<i class="n">¬</i></div></div>
<div style="left:1508.0px;top:168.8px;width:42.15px;height:2px;border-bottom:2px dotted #d4234f"></div>
<div style="left:2266.7px;top:336.8px;width:92.72999999999999px;height:2px;border-bottom:2px dotted #d4234f"></div>
<div style="left:1482.71px;top:462.8px;width:25.29px;height:2px;border-bottom:2px dotted #d4234f"></div>
<div style="left:1651.31px;top:462.8px;width:109.59px;height:2px;border-bottom:2px dotted #d4234f"></div>
<div style="left:1845.2px;top:483.8px;width:33.72px;height:2px;border-bottom:2px dotted #d4234f"></div>
<div style="left:1448.99px;top:525.8px;width:67.44px;height:2px;border-bottom:2px dotted #d4234f"></div>
<div style="left:1609.16px;top:693.8px;width:59.01px;height:2px;border-bottom:2px dotted #d4234f"></div>
<div style="left:1904.21px;top:693.8px;width:92.72999999999999px;height:2px;border-bottom:2px dotted #d4234f"></div>
<div style="left:1347.8300000000002px;top:882.8px;width:101.16px;height:2px;border-bottom:2px dotted #d4234f"></div>
<div style="left:1339.4px;top:966.8px;width:92.72999999999999px;height:2px;border-bottom:2px dotted #d4234f"></div>
<div style="left:1971.65px;top:987.8px;width:92.72999999999999px;height:2px;border-bottom:2px dotted #d4234f"></div>
<div style="left:2308.85px;top:1071.8px;width:25.29px;height:2px;border-bottom:2px dotted #d4234f"></div>
<div style="left:2106.53px;top:1197.8px;width:25.29px;height:2px;border-bottom:2px dotted #d4234f"></div>
<div style="left:1273px;top:1220px;width:1249px;height:118px;background:#d9d9d9;border-top:1px solid #c5c5c5"></div>
<div id="f19" style="left:1282px;top:1231.7px;font-size:14px;line-height:18px;color:#3a3a3a;font-family:'Liberation Sans', sans-serif;transform:scaleX(0.9072);transform-origin:0 0;white-space:pre;">2 results found for &#x27;cogtool&#x27;</div>
<div id="f20" style="left:2133px;top:1232px;white-space:pre;font-size:14px;line-height:18px;color:#8a8a8a;transform:scaleX(0.8637);transform-origin:0 0;">Finding with Options: <span style="color:#333">Case Insensitive</span></div>
<div style="left:2344.6px;top:1230px;width:35px;height:24px;background:#f3f3f3;border:1px solid #c7c7c7"></div>
<div style="left:2379.6px;top:1230px;width:35px;height:24px;background:#f3f3f3;border:1px solid #c7c7c7"></div>
<div style="left:2414.6px;top:1230px;width:35px;height:24px;background:#f3f3f3;border:1px solid #c7c7c7"></div>
<div style="left:2449.6px;top:1230px;width:35px;height:24px;background:#f3f3f3;border:1px solid #c7c7c7"></div>
<div style="left:2353px;top:1232.5px;font-size:16px;line-height:21px;color:#333;font-family:'Liberation Sans', sans-serif;font-weight:bold;white-space:pre;">.*</div>
<div style="left:2386px;top:1233.0px;font-size:15px;line-height:20px;color:#333;font-family:'Liberation Sans', sans-serif;white-space:pre;">Aa</div>
<svg style="left:2420px;top:1235px;" width="24" height="14" viewBox="0 0 24 14"><path d="M2 3h20M2 7h10M15 7h7M2 11h14" stroke="#333" stroke-width="2"/></svg>
<svg style="left:2455px;top:1235px;" width="24" height="14" viewBox="0 0 24 14"><path d="M3 3v7M7 3v7M11 3v7M15 3v7M19 3v7M3 11h17" stroke="#333" stroke-width="1.6"/></svg>
<svg style="left:2497px;top:1236px;" width="14" height="14" viewBox="0 0 14 14"><path d="M2 2l10 10M12 2L2 12" stroke="#777" stroke-width="1.8"/></svg>
<div style="left:1282.7px;top:1263px;width:957.5px;height:27px;background:#efefef;border:1px solid #c9c9c9;border-radius:3px"></div>
<div style="left:1289px;top:1266.5px;font-size:15px;line-height:20px;color:#222;font-family:'Liberation Mono', monospace;white-space:pre;">cogtool</div>
<div style="left:2188px;top:1268.5px;font-size:13px;line-height:17px;color:#33a351;font-family:'Liberation Sans', sans-serif;white-space:pre;">2 found</div>
<div style="left:1282.7px;top:1301px;width:957.5px;height:27px;background:#efefef;border:1px solid #c9c9c9;border-radius:3px"></div>
<div style="left:1289px;top:1304.5px;font-size:15px;line-height:20px;color:#9a9a9a;font-family:'Liberation Mono', monospace;white-space:pre;">Replace in current buffer</div>
<div style="left:2250.7px;top:1263px;width:82.80000000000018px;height:27px;background:#f4f4f4;border:1px solid #c9c9c9;border-radius:3px"></div>
<div style="left:2250.7px;top:1263px;width:82.80000000000018px;height:27px;line-height:27px;text-align:center;font-size:14px;color:#333">Find</div>
<div style="left:2344.6px;top:1263px;width:166.4000000000001px;height:27px;background:#f4f4f4;border:1px solid #c9c9c9;border-radius:3px"></div>
<div style="left:2344.6px;top:1263px;width:166.4000000000001px;height:27px;line-height:27px;text-align:center;font-size:14px;color:#333">Find All</div>
<div style="left:2250.7px;top:1301px;width:82.80000000000018px;height:27px;background:#f4f4f4;border:1px solid #c9c9c9;border-radius:3px"></div>
<div style="left:2250.7px;top:1301px;width:82.80000000000018px;height:27px;line-height:27px;text-align:center;font-size:14px;color:#333">Replace</div>
<div style="left:2344.6px;top:1301px;width:166.4000000000001px;height:27px;background:#f4f4f4;border:1px solid #c9c9c9;border-radius:3px"></div>
<div style="left:2344.6px;top:1301px;width:166.4000000000001px;height:27px;line-height:27px;text-align:center;font-size:14px;color:#333">Replace All</div>
<div style="left:1273px;top:1338px;width:1249px;height:31px;background:#dcdcdc;border-top:1px solid #c9c9c9"></div>
<div id="f21" style="left:1258px;top:1344.5px;font-size:14px;line-height:18px;color:#333;font-family:'Liberation Sans', sans-serif;transform:scaleX(0.8567);transform-origin:0 0;white-space:pre;">07-05-vis.markdown</div>
<div style="left:1385px;top:1344.5px;font-size:14px;line-height:18px;color:#333;font-family:'Liberation Sans', sans-serif;white-space:pre;">128:28</div>
<div id="f22" style="left:1957.4px;top:1344.5px;font-size:14px;line-height:18px;color:#333;font-family:'Liberation Sans', sans-serif;transform:scaleX(0.9178);transform-origin:0 0;white-space:pre;">LF</div>
<div id="f23" style="left:1988px;top:1344.5px;font-size:14px;line-height:18px;color:#333;font-family:'Liberation Sans', sans-serif;transform:scaleX(0.8066);transform-origin:0 0;white-space:pre;">UTF-8</div>
<div id="f24" style="left:2038px;top:1344.5px;font-size:14px;line-height:18px;color:#333;font-family:'Liberation Sans', sans-serif;transform:scaleX(0.8836);transform-origin:0 0;white-space:pre;">GitHub Markdown</div>
<svg style="left:2150px;top:1345px;" width="14" height="16" viewBox="0 0 14 16"><circle cx="4" cy="3" r="2" stroke="#333" fill="none"/><circle cx="4" cy="13" r="2" stroke="#333" fill="none"/><circle cx="11" cy="5" r="2" stroke="#333" fill="none"/><path d="M4 5v6M11 7c0 3-7 2-7 4" stroke="#333" fill="none"/></svg>
<div id="f25" style="left:2167.5px;top:1344.5px;font-size:14px;line-height:18px;color:#333;font-family:'Liberation Sans', sans-serif;transform:scaleX(0.9346);transform-origin:0 0;white-space:pre;">master</div>
<svg style="left:2220px;top:1346px;" width="12" height="14" viewBox="0 0 12 14"><path d="M6 1L1 7h3v6h4V7h3z" fill="#333"/></svg>
<div id="f26" style="left:2238px;top:1344.5px;font-size:14px;line-height:18px;color:#333;font-family:'Liberation Sans', sans-serif;transform:scaleX(0.8258);transform-origin:0 0;white-space:pre;">Push 1</div>
<svg style="left:2293px;top:1345px;" width="16" height="16" viewBox="0 0 16 16"><path d="M8 0.5a7.5 7.5 0 0 0-2.4 14.6c.4.1.5-.2.5-.4v-1.4c-2.1.5-2.5-1-2.5-1-.3-.9-.8-1.1-.8-1.1-.7-.5.1-.5.1-.5.8.1 1.2.8 1.2.8.7 1.2 1.8.8 2.2.6.1-.5.3-.8.5-1-1.7-.2-3.4-.8-3.4-3.7 0-.8.3-1.5.8-2-.1-.2-.3-1 .1-2 0 0 .6-.2 2 .8a7 7 0 0 1 3.8 0c1.4-1 2-.8 2-.8.4 1 .2 1.8.1 2 .5.5.8 1.2.8 2 0 2.9-1.8 3.5-3.4 3.7.3.2.5.7.5 1.4v2.1c0 .2.1.5.5.4A7.5 7.5 0 0 0 8 .5z" fill="#333"/></svg>
<div id="f27" style="left:2310px;top:1344.5px;font-size:14px;line-height:18px;color:#333;font-family:'Liberation Sans', sans-serif;transform:scaleX(0.9867);transform-origin:0 0;white-space:pre;">GitHub</div>
<svg style="left:2361px;top:1347px;" width="18" height="12" viewBox="0 0 18 12"><circle cx="9" cy="6" r="3.5" stroke="#333" stroke-width="1.8" fill="none"/><path d="M0 6h5M13 6h5" stroke="#333" stroke-width="1.8"/></svg>
<div id="f28" style="left:2387px;top:1344.5px;font-size:14px;line-height:18px;color:#333;font-family:'Liberation Sans', sans-serif;transform:scaleX(0.9514);transform-origin:0 0;white-space:pre;">Git (2)</div>
<svg style="left:2430px;top:1345px;" width="18" height="16" viewBox="0 0 18 16"><path d="M2 4l7-3 7 3v8l-7 3-7-3z M2 4l7 3 7-3 M9 7v8" stroke="#2f9cf0" stroke-width="1.5" fill="none"/></svg>
<div id="f29" style="left:2459.6px;top:1344.5px;font-size:14px;line-height:18px;color:#2f9cf0;font-family:'Liberation Sans', sans-serif;transform:scaleX(0.8455);transform-origin:0 0;white-space:pre;">4 updates</div>
<div style="left:1262px;top:706px;width:35px;height:48px;overflow:hidden"><div style="left:-13px;top:0;width:48px;height:48px;border-radius:50%;background:#d6d6d6"></div></div>
<svg style="left:1274px;top:723px;" width="10" height="14" viewBox="0 0 10 14"><path d="M7 2L2 7l5 5" stroke="#333" stroke-width="1.8" fill="none"/></svg>
<div style="left:288px;top:112px;width:974px;height:1256px;background:#fefefe;border-radius:6px 6px 0 0;box-shadow:0 0 12px rgba(0,0,0,.5)"></div>
<div style="left:288px;top:112px;width:974px;height:30px;background:linear-gradient(180deg,#45433e,#3a3934);border-radius:6px 6px 0 0"></div>
<div id="f30" style="left:533.0px;top:117.0px;font-size:15px;line-height:20px;color:#dfdbd2;font-family:'Liberation Sans', sans-serif;font-weight:bold;transform:scaleX(1.0004);transform-origin:0 0;white-space:pre;">Visualisation Recommender Systems | VisualModel - Mozilla Firefox</div>
<div style="left:1200px;top:119px;width:16px;height:16px;border-radius:50%;background:#5a5954"></div>
<div style="left:1220px;top:119px;width:16px;height:16px;border-radius:50%;background:#5a5954"></div>
<div style="left:1240px;top:119px;width:16px;height:16px;border-radius:50%;background:#e9541f"></div>
<svg style="left:1202px;top:121px;" width="52" height="12" viewBox="0 0 52 12"><path d="M2 6h8" stroke="#2e2d2a" stroke-width="1.5"/><rect x="22" y="2" width="8" height="8" stroke="#2e2d2a" stroke-width="1.3" fill="none"/><path d="M43 3l6 6M49 3l-6 6" stroke="#3a1a0e" stroke-width="1.5"/></svg>
<div style="left:288px;top:142px;width:974px;height:33px;background:#4b4842"></div>
<div style="left:445px;top:142px;width:156px;height:33px;background:#f5f4f2"></div>
<div style="left:445px;top:142px;width:156px;height:2px;background:#ee7a4b"></div>
<svg style="left:296.6px;top:150px;" width="18" height="18" viewBox="0 0 18 18"><circle cx="5" cy="8" r="3" fill="#1a8a8a"/><circle cx="13" cy="4" r="2.5" fill="#e33"/><circle cx="11" cy="13" r="3" fill="#f3d34a"/><path d="M5 8L13 4M5 8L11 13" stroke="#555" stroke-width="1"/></svg>
<div style="left:319px;top:148px;width:97.30000000000001px;height:22px;overflow:hidden;font-size:15px;line-height:22px;white-space:pre;color:#e9e6df;">VisualModel</div>
<svg style="left:419.3px;top:152px;" width="14" height="14" viewBox="0 0 14 14"><path d="M2 2l10 10M12 2L2 12" stroke="#e9e6df" stroke-width="1.6"/></svg>
<svg style="left:453px;top:150px;" width="18" height="18" viewBox="0 0 18 18"><circle cx="5" cy="8" r="3" fill="#1a8a8a"/><circle cx="13" cy="4" r="2.5" fill="#e33"/><circle cx="11" cy="13" r="3" fill="#f3d34a"/><path d="M5 8L13 4M5 8L11 13" stroke="#555" stroke-width="1"/></svg>
<div style="left:476px;top:148px;width:97.39999999999998px;height:22px;overflow:hidden;font-size:15px;line-height:22px;white-space:pre;color:#333;-webkit-mask-image:linear-gradient(90deg,#000 72%,transparent 98%);">Visualisation Recommender</div>
<svg style="left:576.4px;top:152px;" width="14" height="14" viewBox="0 0 14 14"><path d="M2 2l10 10M12 2L2 12" stroke="#333" stroke-width="1.6"/></svg>
<svg style="left:609.6px;top:150px;" width="18" height="18" viewBox="0 0 18 18"><circle cx="5" cy="8" r="3" fill="#1a8a8a"/><circle cx="13" cy="4" r="2.5" fill="#e33"/><circle cx="11" cy="13" r="3" fill="#f3d34a"/><path d="M5 8L13 4M5 8L11 13" stroke="#555" stroke-width="1"/></svg>
<div style="left:632.5px;top:148px;width:98.39999999999998px;height:22px;overflow:hidden;font-size:15px;line-height:22px;white-space:pre;color:#e9e6df;-webkit-mask-image:linear-gradient(90deg,#000 72%,transparent 98%);">Vision: DSVL Notation</div>
<svg style="left:733.9px;top:152px;" width="14" height="14" viewBox="0 0 14 14"><path d="M2 2l10 10M12 2L2 12" stroke="#e9e6df" stroke-width="1.6"/></svg>
<svg style="left:766px;top:150px;" width="18" height="18" viewBox="0 0 18 18"><circle cx="9" cy="9" r="8.5" fill="#fff"/><path d="M9 4.2a4.8 4.8 0 1 0 4.7 5.6H9V8h6.5" stroke="#4285f4" stroke-width="2.4" fill="none"/><path d="M5 6a4.8 4.8 0 0 1 7-1" stroke="#ea4335" stroke-width="2.4" fill="none"/><path d="M4.3 10a4.8 4.8 0 0 0 2 3.2" stroke="#fbbc05" stroke-width="2.4" fill="none"/><path d="M6.5 13.4a4.8 4.8 0 0 0 6-.4" stroke="#34a853" stroke-width="2.4" fill="none"/></svg>
<div style="left:790px;top:148px;width:97.39999999999998px;height:22px;overflow:hidden;font-size:15px;line-height:22px;white-space:pre;color:#e9e6df;-webkit-mask-image:linear-gradient(90deg,#000 72%,transparent 98%);">US20130080044A1</div>
<svg style="left:890.4px;top:152px;" width="14" height="14" viewBox="0 0 14 14"><path d="M2 2l10 10M12 2L2 12" stroke="#e9e6df" stroke-width="1.6"/></svg>
<svg style="left:923.7px;top:150px;" width="18" height="18" viewBox="0 0 18 18"><rect x="2" y="11" width="2.5" height="5" fill="#111"/><rect x="6" y="8" width="2.5" height="8" fill="#111"/><rect x="10" y="5" width="2.5" height="11" fill="#111"/><rect x="14" y="2" width="2.5" height="14" fill="#111"/></svg>
<div style="left:946.6px;top:148px;width:97.80000000000007px;height:22px;overflow:hidden;font-size:15px;line-height:22px;white-space:pre;color:#e9e6df;-webkit-mask-image:linear-gradient(90deg,#000 72%,transparent 98%);">Announcing Power BI</div>
<svg style="left:1047.4px;top:152px;" width="14" height="14" viewBox="0 0 14 14"><path d="M2 2l10 10M12 2L2 12" stroke="#e9e6df" stroke-width="1.6"/></svg>
<svg style="left:1080.7px;top:150px;" width="18" height="18" viewBox="0 0 18 18"><circle cx="9" cy="9" r="8.5" fill="#fff"/><path d="M9 4.2a4.8 4.8 0 1 0 4.7 5.6H9V8h6.5" stroke="#4285f4" stroke-width="2.4" fill="none"/><path d="M5 6a4.8 4.8 0 0 1 7-1" stroke="#ea4335" stroke-width="2.4" fill="none"/><path d="M4.3 10a4.8 4.8 0 0 0 2 3.2" stroke="#fbbc05" stroke-width="2.4" fill="none"/><path d="M6.5 13.4a4.8 4.8 0 0 0 6-.4" stroke="#34a853" stroke-width="2.4" fill="none"/></svg>
<div style="left:1104px;top:148px;width:98px;height:22px;overflow:hidden;font-size:15px;line-height:22px;white-space:pre;color:#e9e6df;-webkit-mask-image:linear-gradient(90deg,#000 72%,transparent 98%);">US20180088753A1</div>
<svg style="left:1205px;top:152px;" width="14" height="14" viewBox="0 0 14 14"><path d="M2 2l10 10M12 2L2 12" stroke="#e9e6df" stroke-width="1.6"/></svg>
<div style="left:757.8px;top:150px;width:1px;height:20px;background:#6a675f"></div>
<div style="left:914.3px;top:150px;width:1px;height:20px;background:#6a675f"></div>
<div style="left:1070.8px;top:150px;width:1px;height:20px;background:#6a675f"></div>
<div style="left:1227.3px;top:150px;width:1px;height:20px;background:#6a675f"></div>
<svg style="left:1237px;top:151px;" width="16" height="16" viewBox="0 0 16 16"><path d="M8 1v14M1 8h14" stroke="#e9e6df" stroke-width="1.8"/></svg>
<div style="left:288px;top:175px;width:974px;height:41px;background:#f5f4f3;border-bottom:1px solid #d3d2cf"></div>
<div style="left:291.5px;top:178.5px;width:34px;height:34px;border-radius:50%;border:1px solid #c9c9c9;background:#f7f7f6"></div>
<svg style="left:298px;top:187px;" width="100" height="18" viewBox="0 0 100 18"><path d="M19 9H3M9 3L3 9l6 6" stroke="#a9a9a9" stroke-width="1.8" fill="none"/><path d="M33 9h15M42 3l6 6-6 6" stroke="#a9a9a9" stroke-width="1.8" fill="none"/></svg>
<svg style="left:363px;top:185px;" width="56" height="22" viewBox="0 0 56 22"><path d="M17 8a7 7 0 1 0 1 5" stroke="#3a3a3a" stroke-width="2" fill="none"/><path d="M12 3h7v7z" fill="#3a3a3a"/><path d="M42 3l9 8h-3v8h-12v-8h-3z" stroke="#3a3a3a" stroke-width="1.8" fill="none"/><rect x="40" y="13" width="4" height="6" fill="#3a3a3a"/></svg>
<div style="left:482px;top:181px;width:549px;height:28px;background:#fff;border:1px solid #c7c6c3;border-radius:3px"></div>
<svg style="left:489px;top:187px;" width="16" height="16" viewBox="0 0 16 16"><circle cx="8" cy="8" r="7" stroke="#555" stroke-width="1.3" fill="none"/><path d="M8 7v5" stroke="#555" stroke-width="1.6"/><circle cx="8" cy="4.5" r="1" fill="#555"/></svg>
<div style="left:515px;top:185px;font-size:15px;line-height:20px;white-space:pre;color:#8d8c88" id="f9002"><span style="color:#222">127.0.0.1</span>:4000/2019/07/vis.html</div>
<svg style="left:911px;top:187px;" width="16" height="16" viewBox="0 0 16 16"><rect x="2" y="1" width="12" height="14" rx="1.5" stroke="#555" stroke-width="1.3" fill="none"/><path d="M5 5h6M5 8h6M5 11h4" stroke="#555" stroke-width="1.2"/></svg>
<div style="left:940px;top:186px;width:1px;height:19px;background:#ccc"></div>
<svg style="left:953px;top:192px;" width="18" height="6" viewBox="0 0 18 6"><circle cx="3" cy="3" r="2" fill="#555"/><circle cx="9" cy="3" r="2" fill="#555"/><circle cx="15" cy="3" r="2" fill="#555"/></svg>
<svg style="left:981px;top:187px;" width="17" height="16" viewBox="0 0 17 16"><path d="M1 2h15v6a7.5 7 0 0 1-15 0z" stroke="#555" stroke-width="1.5" fill="none"/><path d="M5 7l3.5 3 3.5-3" stroke="#555" stroke-width="1.6" fill="none"/></svg>
<svg style="left:1009px;top:186px;" width="17" height="17" viewBox="0 0 17 17"><path d="M8.5 1l2.2 5 5.3.5-4 3.5 1.2 5.3-4.7-2.8-4.7 2.8 1.2-5.3-4-3.5 5.3-.5z" stroke="#555" stroke-width="1.3" fill="none"/></svg>
<svg style="left:1100px;top:187px;" width="18" height="16" viewBox="0 0 18 16"><path d="M2 1v14M6 1v14M10 1v14M12 2l5 13" stroke="#444" stroke-width="1.6"/></svg>
<svg style="left:1132px;top:187px;" width="17" height="16" viewBox="0 0 17 16"><rect x="1" y="2" width="15" height="12" rx="2" stroke="#444" stroke-width="1.5" fill="none"/><path d="M6 2v12M3 5h2M3 8h2" stroke="#444" stroke-width="1.3"/></svg>
<svg style="left:1164px;top:186px;" width="17" height="17" viewBox="0 0 17 17"><rect x="1" y="4" width="6" height="6" fill="#444"/><rect x="1" y="11" width="6" height="5" fill="#444"/><rect x="9" y="11" width="6" height="5" fill="#444"/><path d="M12 1v8M8 5h8" stroke="#444" stroke-width="1.5"/></svg>
<svg style="left:1196px;top:186px;" width="18" height="18" viewBox="0 0 18 18"><circle cx="8" cy="9" r="7" stroke="#444" stroke-width="1.6" fill="none"/><circle cx="8" cy="8" r="2.5" fill="#444"/><path d="M3.5 13.5a5 4 0 0 1 9 0" fill="#444"/><circle cx="14" cy="3" r="2.5" fill="#0a84ff"/></svg>
<div style="left:1223px;top:184px;width:1px;height:24px;background:#d4d4d4"></div>
<svg style="left:1234px;top:187px;" width="18" height="16" viewBox="0 0 18 16"><path d="M2 3h14M2 8h14M2 13h14" stroke="#444" stroke-width="1.7"/></svg>
<div style="left:1250px;top:216px;width:12px;height:1152px;background:#f1f0ef"></div>
<div style="left:1257px;top:626px;width:5px;height:134px;background:#f28c5e"></div>
<div id="f31" style="left:399px;top:218.6px;font-size:16px;line-height:24px;color:#0d0d0d;font-family:'Liberation Sans', sans-serif;transform:scaleX(0.9903);transform-origin:0 0;white-space:pre;">operations to extract an <i>X</i> feature and a <i>Y</i> feature (optionally also a <i>Y</i><sub>2</sub> or <i>Z</i> feature) that may be</div>
<div id="f32" style="left:399px;top:245.2px;font-size:16px;line-height:24px;color:#0d0d0d;font-family:'Liberation Sans', sans-serif;transform:scaleX(0.9901);transform-origin:0 0;white-space:pre;">visualised as a bar, pie, line, or scatter plot. A decision tree classifier was trained on a corpus of manually</div>
<div id="f33" style="left:399px;top:269.2px;font-size:16px;line-height:24px;color:#0d0d0d;font-family:'Liberation Sans', sans-serif;transform:scaleX(1.0026);transform-origin:0 0;white-space:pre;">annotated examples to learn statistical features that correspond to good visualisations. The system</div>
<div id="f34" style="left:399px;top:293.2px;font-size:16px;line-height:24px;color:#0d0d0d;font-family:'Liberation Sans', sans-serif;transform:scaleX(0.9938);transform-origin:0 0;white-space:pre;">explores the space of possible visualisations, using the trained decision tree to filter out bad</div>
<div id="f35" style="left:399px;top:317.2px;font-size:16px;line-height:24px;color:#0d0d0d;font-family:'Liberation Sans', sans-serif;transform:scaleX(0.9886);transform-origin:0 0;white-space:pre;">recommendations, and heuristics (such as column importance) are used to rank the remaining good</div>
<div id="f36" style="left:399px;top:341.2px;font-size:16px;line-height:24px;color:#0d0d0d;font-family:'Liberation Sans', sans-serif;transform:scaleX(1.0043);transform-origin:0 0;white-space:pre;">visualisations. The heuristic ranking is further combined with ranking using the LambdaMART algorithm</div>
<div id="f37" style="left:399px;top:365.2px;font-size:16px;line-height:24px;color:#0d0d0d;font-family:'Liberation Sans', sans-serif;transform:scaleX(0.9861);transform-origin:0 0;white-space:pre;">to form a hybrid rank. As DeepEye primarily operates on <i>X</i> and <i>Y</i> features, it considers the statistical</div>
<div id="f38" style="left:399px;top:389.2px;font-size:16px;line-height:24px;color:#0d0d0d;font-family:'Liberation Sans', sans-serif;transform:scaleX(1.0107);transform-origin:0 0;white-space:pre;">correlation of the columns when making visualisation decisions, not just individual column statistics.</div>
<div id="f39" style="left:399px;top:428.3px;font-size:16px;line-height:24px;color:#0d0d0d;font-family:'Liberation Sans', sans-serif;transform:scaleX(0.9979);transform-origin:0 0;white-space:pre;"><b>Data2Vis</b> (Dibia 2019) takes the novel approach of treating visualisation recommendation as a language</div>
<div id="f40" style="left:399px;top:452.3px;font-size:16px;line-height:24px;color:#0d0d0d;font-family:'Liberation Sans', sans-serif;transform:scaleX(0.9803);transform-origin:0 0;white-space:pre;">translation problem, and uses a seq2seq (Sequence to Sequence) deep neural network architecture to</div>
<div id="f41" style="left:399px;top:476.3px;font-size:16px;line-height:24px;color:#0d0d0d;font-family:'Liberation Sans', sans-serif;transform:scaleX(0.9912);transform-origin:0 0;white-space:pre;">learn the relationship between data rows and view specifications. Data2Vis uses Vega-Lite as the choice</div>
<div id="f42" style="left:399px;top:500.3px;font-size:16px;line-height:24px;color:#0d0d0d;font-family:'Liberation Sans', sans-serif;transform:scaleX(0.9992);transform-origin:0 0;white-space:pre;">of visualisation grammar due to the simplicity of the Vega-Lite syntax (which is learned by the seq2seq</div>
<div id="f43" style="left:399px;top:524.3px;font-size:16px;line-height:24px;color:#0d0d0d;font-family:'Liberation Sans', sans-serif;transform:scaleX(1.0023);transform-origin:0 0;white-space:pre;">model); however, in principle, it could adapt to any visualisation grammar given sufficient training data.</div>
<div id="f44" style="left:399px;top:548.3px;font-size:16px;line-height:24px;color:#0d0d0d;font-family:'Liberation Sans', sans-serif;transform:scaleX(0.9917);transform-origin:0 0;white-space:pre;">Unfortunately, as it currently only uses a single row from the dataset as input, it is unable to take into</div>
<div id="f45" style="left:399px;top:572.3px;font-size:16px;line-height:24px;color:#0d0d0d;font-family:'Liberation Sans', sans-serif;transform:scaleX(0.9907);transform-origin:0 0;white-space:pre;">consideration any statistical patterns. While the approach is elegant, a recent benchmarking test (Hu</div>
<div id="f46" style="left:399px;top:596.3px;font-size:16px;line-height:24px;color:#0d0d0d;font-family:'Liberation Sans', sans-serif;transform:scaleX(1.0039);transform-origin:0 0;white-space:pre;">2019) found that Data2Vis was only slightly better than a random baseline.</div>
<div id="f47" style="left:399px;top:635.5px;font-size:16px;line-height:24px;color:#0d0d0d;font-family:'Liberation Sans', sans-serif;transform:scaleX(1.0009);transform-origin:0 0;white-space:pre;"><b>VizML</b> (Hu 2019) use a feedforward neural network trained on a community feed of Plotly visualisations</div>
<div id="f48" style="left:399px;top:659.5px;font-size:16px;line-height:24px;color:#0d0d0d;font-family:'Liberation Sans', sans-serif;transform:scaleX(1.0013);transform-origin:0 0;white-space:pre;">to predict a partial view specification given a feature vector of statistics extracted from the data. These</div>
<div id="f49" style="left:399px;top:683.5px;font-size:16px;line-height:24px;color:#0d0d0d;font-family:'Liberation Sans', sans-serif;transform:scaleX(0.9866);transform-origin:0 0;white-space:pre;">predicted specification includes the type of visualisation (e.g. scatter, line, bar, box, histogram, pie),</div>
<div id="f50" style="left:399px;top:707.5px;font-size:16px;line-height:24px;color:#0d0d0d;font-family:'Liberation Sans', sans-serif;transform:scaleX(0.9962);transform-origin:0 0;white-space:pre;">whether a column will appear on an axis, and whether a column will share an axis with another column.</div>
<div id="f51" style="left:399px;top:731.5px;font-size:16px;line-height:24px;color:#0d0d0d;font-family:'Liberation Sans', sans-serif;transform:scaleX(0.9962);transform-origin:0 0;white-space:pre;">As VizML only predicts a partial specification, it cannot generate visualisations. However, the authors of</div>
<div id="f52" style="left:399px;top:755.5px;font-size:16px;line-height:24px;color:#0d0d0d;font-family:'Liberation Sans', sans-serif;transform:scaleX(1.0061);transform-origin:0 0;white-space:pre;">VizML suggest that it may be useful as an intelligent “autocomplete” when editing view specifications.</div>
<div id="f53" style="left:399px;top:794.5px;font-size:16px;line-height:24px;color:#0d0d0d;font-family:'Liberation Sans', sans-serif;transform:scaleX(0.9946);transform-origin:0 0;white-space:pre;"><b>Draco</b> (Dominik 2019) incorporates design principles as a set of constraints. The treatment of</div>
<div id="f54" style="left:399px;top:818.5px;font-size:16px;line-height:24px;color:#0d0d0d;font-family:'Liberation Sans', sans-serif;transform:scaleX(1.0078);transform-origin:0 0;white-space:pre;">visualisation recommendation as a constraint satisfaction problem is a well-established approach that</div>
<div id="f55" style="left:399px;top:842.5px;font-size:16px;line-height:24px;color:#0d0d0d;font-family:'Liberation Sans', sans-serif;transform:scaleX(1.0002);transform-origin:0 0;white-space:pre;">dates back to the APT system (Mackinlay 1986). Draco allows soft-constraints that may be violated, and</div>
<div id="f56" style="left:399px;top:866.5px;font-size:16px;line-height:24px;color:#0d0d0d;font-family:'Liberation Sans', sans-serif;transform:scaleX(0.9974);transform-origin:0 0;white-space:pre;">associated weights to represent the cost of constraint violation. In contrast to APT, Draco has the ability</div>
<div id="f57" style="left:399px;top:890.5px;font-size:16px;line-height:24px;color:#0d0d0d;font-family:'Liberation Sans', sans-serif;transform:scaleX(1.0090);transform-origin:0 0;white-space:pre;">to learn the appropriate weight for soft-constraints from data in order to help make decisions between</div>
<div id="f58" style="left:399px;top:914.5px;font-size:16px;line-height:24px;color:#0d0d0d;font-family:'Liberation Sans', sans-serif;transform:scaleX(0.9941);transform-origin:0 0;white-space:pre;">conflicting heuristics. These weights are learned using the RankSVM algorithm, which learns from pairs</div>
<div id="f59" style="left:399px;top:938.5px;font-size:16px;line-height:24px;color:#0d0d0d;font-family:'Liberation Sans', sans-serif;transform:scaleX(1.0067);transform-origin:0 0;white-space:pre;">of visualisations manually labelled with which visualisation in the pair is preferable. Constraints are</div>
<div id="f60" style="left:399px;top:962.5px;font-size:16px;line-height:24px;color:#0d0d0d;font-family:'Liberation Sans', sans-serif;transform:scaleX(0.9937);transform-origin:0 0;white-space:pre;">expressed in a logic programming language (Answer Set Programming), which allows design principles</div>
<div id="f61" style="left:399px;top:986.5px;font-size:16px;line-height:24px;color:#0d0d0d;font-family:'Liberation Sans', sans-serif;transform:scaleX(0.9845);transform-origin:0 0;white-space:pre;">and heuristics to be conditioned on predicates provided by the user. For example, Draco uses predicates</div>
<div id="f62" style="left:399px;top:1010.5px;font-size:16px;line-height:24px;color:#0d0d0d;font-family:'Liberation Sans', sans-serif;transform:scaleX(1.0097);transform-origin:0 0;white-space:pre;">to condition the visualisation on column statistics and contextual factors (such as column importance, or</div>
<div id="f63" style="left:399px;top:1034.5px;font-size:16px;line-height:24px;color:#0d0d0d;font-family:'Liberation Sans', sans-serif;transform:scaleX(0.9898);transform-origin:0 0;white-space:pre;">the type of task). Draco generates view specifications in the Vega-Lite grammar. While Vega-Lite itself</div>
<div id="f64" style="left:399px;top:1058.5px;font-size:16px;line-height:24px;color:#0d0d0d;font-family:'Liberation Sans', sans-serif;transform:scaleX(0.9894);transform-origin:0 0;white-space:pre;">supports interaction and geographic maps, Draco only searches a subset of the Vega-Lite grammar, and</div>
<div id="f65" style="left:399px;top:1082.5px;font-size:16px;line-height:24px;color:#0d0d0d;font-family:'Liberation Sans', sans-serif;transform:scaleX(0.9869);transform-origin:0 0;white-space:pre;">does not currently appear to support these features. Nevertheless, the authors of Draco note “interaction</div>
<div id="f66" style="left:399px;top:1106.5px;font-size:16px;line-height:24px;color:#0d0d0d;font-family:'Liberation Sans', sans-serif;transform:scaleX(1.0062);transform-origin:0 0;white-space:pre;">primitives” as future work.</div>
<div style="left:399px;top:1144px;width:739.4px;height:69.4px;background:#f2f2f2;border:1px solid #dedede"></div>
<div style="left:399px;top:1213.4px;width:739.4px;height:69.1px;background:#fff;border:1px solid #dedede;border-top:0"></div>
<div style="left:399px;top:1282.5px;width:739.4px;height:85.5px;background:#f9f9f9;border-left:1px solid #dedede;border-right:1px solid #dedede"></div>
<div style="left:514.3px;top:1144px;width:1px;height:224px;background:#dedede"></div>
<div style="left:644.5px;top:1144px;width:1px;height:224px;background:#dedede"></div>
<div style="left:776.1px;top:1144px;width:1px;height:224px;background:#dedede"></div>
<div style="left:884px;top:1144px;width:1px;height:224px;background:#dedede"></div>
<div style="left:1001.2px;top:1144px;width:1px;height:224px;background:#dedede"></div>
<div style="left:415px;top:1167.0px;font-size:16px;line-height:24px;color:#333;font-family:'Liberation Sans', sans-serif;font-weight:bold;letter-spacing:-0.2pxwhite-space:pre;">System</div>
<div style="left:530.3px;top:1155.0px;font-size:16px;line-height:24px;color:#333;font-family:'Liberation Sans', sans-serif;font-weight:bold;letter-spacing:-0.2pxwhite-space:pre;">Contextual</div>
<div style="left:530.3px;top:1179.0px;font-size:16px;line-height:24px;color:#333;font-family:'Liberation Sans', sans-serif;font-weight:bold;letter-spacing:-0.2pxwhite-space:pre;">Factors</div>
<div style="left:660.5px;top:1167.0px;font-size:16px;line-height:24px;color:#333;font-family:'Liberation Sans', sans-serif;font-weight:bold;letter-spacing:-0.2pxwhite-space:pre;">Data Patterns</div>
<div style="left:792.1px;top:1155.0px;font-size:16px;line-height:24px;color:#333;font-family:'Liberation Sans', sans-serif;font-weight:bold;letter-spacing:-0.2pxwhite-space:pre;">Machine</div>
<div style="left:792.1px;top:1179.0px;font-size:16px;line-height:24px;color:#333;font-family:'Liberation Sans', sans-serif;font-weight:bold;letter-spacing:-0.2pxwhite-space:pre;">Learning</div>
<div style="left:900px;top:1155.0px;font-size:16px;line-height:24px;color:#333;font-family:'Liberation Sans', sans-serif;font-weight:bold;letter-spacing:-0.2pxwhite-space:pre;">Design</div>
<div style="left:900px;top:1179.0px;font-size:16px;line-height:24px;color:#333;font-family:'Liberation Sans', sans-serif;font-weight:bold;letter-spacing:-0.2pxwhite-space:pre;">Principles</div>
<div style="left:1017.2px;top:1155.0px;font-size:16px;line-height:24px;color:#333;font-family:'Liberation Sans', sans-serif;font-weight:bold;letter-spacing:-0.2pxwhite-space:pre;">Visualisation</div>
<div style="left:1017.2px;top:1179.0px;font-size:16px;line-height:24px;color:#333;font-family:'Liberation Sans', sans-serif;font-weight:bold;letter-spacing:-0.2pxwhite-space:pre;">Types</div>
<div style="left:415px;top:1224.2px;font-size:16px;line-height:24px;color:#333;font-family:'Liberation Sans', sans-serif;letter-spacing:-0.2pxwhite-space:pre;"><b>VizDeck</b></div>
<div style="left:415px;top:1248.2px;font-size:16px;line-height:24px;color:#333;font-family:'Liberation Sans', sans-serif;letter-spacing:-0.2pxwhite-space:pre;"><i>Key 2012</i></div>
<div style="left:530.3px;top:1236.2px;font-size:16px;line-height:24px;color:#333;font-family:'Liberation Sans', sans-serif;letter-spacing:-0.2pxwhite-space:pre;">User rating</div>
<div style="left:660.5px;top:1224.2px;font-size:16px;line-height:24px;color:#333;font-family:'Liberation Sans', sans-serif;letter-spacing:-0.2pxwhite-space:pre;">Column</div>
<div style="left:660.5px;top:1248.2px;font-size:16px;line-height:24px;color:#333;font-family:'Liberation Sans', sans-serif;letter-spacing:-0.2pxwhite-space:pre;">statistics</div>
<div style="left:792.1px;top:1224.2px;font-size:16px;line-height:24px;color:#333;font-family:'Liberation Sans', sans-serif;letter-spacing:-0.2pxwhite-space:pre;">Decision</div>
<div style="left:792.1px;top:1248.2px;font-size:16px;line-height:24px;color:#333;font-family:'Liberation Sans', sans-serif;letter-spacing:-0.2pxwhite-space:pre;">Tree</div>
<div style="left:900px;top:1236.2px;font-size:16px;line-height:24px;color:#333;font-family:'Liberation Sans', sans-serif;letter-spacing:-0.2pxwhite-space:pre;">Heuristics</div>
<div style="left:1017.2px;top:1224.2px;font-size:16px;line-height:24px;color:#333;font-family:'Liberation Sans', sans-serif;letter-spacing:-0.2pxwhite-space:pre;">JavaScript</div>
<div style="left:1017.2px;top:1248.2px;font-size:16px;line-height:24px;color:#333;font-family:'Liberation Sans', sans-serif;letter-spacing:-0.2pxwhite-space:pre;">widgets</div>
<div style="left:415px;top:1305.2px;font-size:16px;line-height:24px;color:#333;font-family:'Liberation Sans', sans-serif;letter-spacing:-0.2pxwhite-space:pre;"><b>DeepEye</b></div>
<div style="left:415px;top:1329.2px;font-size:16px;line-height:24px;color:#333;font-family:'Liberation Sans', sans-serif;letter-spacing:-0.2pxwhite-space:pre;"><i>Luo 2018</i></div>
<div style="left:530.3px;top:1305.2px;font-size:16px;line-height:24px;color:#333;font-family:'Liberation Sans', sans-serif;letter-spacing:-0.2pxwhite-space:pre;">Column</div>
<div style="left:530.3px;top:1329.2px;font-size:16px;line-height:24px;color:#333;font-family:'Liberation Sans', sans-serif;letter-spacing:-0.2pxwhite-space:pre;">importance</div>
<div style="left:660.5px;top:1293.2px;font-size:16px;line-height:24px;color:#333;font-family:'Liberation Sans', sans-serif;letter-spacing:-0.2pxwhite-space:pre;">Column</div>
<div style="left:660.5px;top:1317.2px;font-size:16px;line-height:24px;color:#333;font-family:'Liberation Sans', sans-serif;letter-spacing:-0.2pxwhite-space:pre;">statistics,</div>
<div style="left:660.5px;top:1341.2px;font-size:16px;line-height:24px;color:#333;font-family:'Liberation Sans', sans-serif;letter-spacing:-0.2pxwhite-space:pre;">Correlations</div>
<div style="left:792.1px;top:1317.2px;font-size:16px;line-height:24px;color:#333;font-family:'Liberation Sans', sans-serif;letter-spacing:-0.2pxwhite-space:pre;">Hybrid</div>
<div style="left:900px;top:1317.2px;font-size:16px;line-height:24px;color:#333;font-family:'Liberation Sans', sans-serif;letter-spacing:-0.2pxwhite-space:pre;">Heuristics</div>
<div style="left:1017.2px;top:1305.2px;font-size:16px;line-height:24px;color:#333;font-family:'Liberation Sans', sans-serif;letter-spacing:-0.2pxwhite-space:pre;">Bar, Pie, Line,</div>
<div style="left:1017.2px;top:1329.2px;font-size:16px;line-height:24px;color:#333;font-family:'Liberation Sans', sans-serif;letter-spacing:-0.2pxwhite-space:pre;">Scatter</div>
<div style="left:0px;top:0px;width:2551px;height:27px;background:linear-gradient(180deg,#45433e,#3a3935)"></div>
<div id="f67" style="left:12px;top:3.5px;font-size:15px;line-height:20px;color:#e8e6e1;font-family:'Liberation Sans', sans-serif;font-weight:bold;transform:scaleX(1.0194);transform-origin:0 0;white-space:pre;">Activities</div>
<svg style="left:100px;top:5px;" width="17" height="17" viewBox="0 0 17 17"><circle cx="8.5" cy="8.5" r="7.5" fill="#ff6a1f"/><circle cx="9" cy="8" r="4.5" fill="#3b5bdb"/><path d="M3 4a7 7 0 0 0 11 10" stroke="#ffcc33" stroke-width="2.5" fill="none"/></svg>
<div id="f68" style="left:122px;top:3.5px;font-size:15px;line-height:20px;color:#e8e6e1;font-family:'Liberation Sans', sans-serif;font-weight:bold;transform:scaleX(0.8881);transform-origin:0 0;white-space:pre;">Firefox Web Browser</div>
<svg style="left:273px;top:10px;" width="11" height="7" viewBox="0 0 11 7"><path d="M0 0h11L5.5 6z" fill="#e8e6e1"/></svg>
<div id="f69" style="left:1281px;top:3.0px;font-size:15px;line-height:20px;color:#e8e6e1;font-family:'Liberation Sans', sans-serif;font-weight:bold;transform:scaleX(0.9424);transform-origin:0 0;white-space:pre;">Thu 14:30</div>
<svg style="left:2216px;top:4px;" width="20" height="18" viewBox="0 0 20 18"><rect x="2" y="4" width="13" height="12" stroke="#ddd" stroke-width="1.6" fill="none"/><path d="M8 11L17 2" stroke="#ddd" stroke-width="2"/></svg>
<svg style="left:2262px;top:3px;" width="20" height="20" viewBox="0 0 20 20"><circle cx="10" cy="10" r="7" stroke="#ddd" stroke-width="2" stroke-dasharray="3 2" fill="none"/><circle cx="13" cy="13" r="5" fill="#36b0f5"/></svg>
<svg style="left:2308px;top:4px;" width="10" height="18" viewBox="0 0 10 18"><rect x="3" y="1" width="4" height="11" rx="2" stroke="#ddd" stroke-width="1.5" fill="none"/><circle cx="5" cy="14" r="3" fill="#ddd"/></svg>
<div style="left:2329px;top:4.5px;font-size:14px;line-height:18px;color:#e8e6e1;font-family:'Liberation Sans', sans-serif;font-weight:bold;white-space:pre;">2%</div>
<svg style="left:2374px;top:5px;" width="20" height="16" viewBox="0 0 20 16"><path d="M5 1l5 3-5 3-5-3zM15 1l5 3-5 3-5-3zM5 8l5 3-5 3-5-3zM15 8l5 3-5 3-5-3z" fill="#ddd"/></svg>
<svg style="left:2424px;top:5px;" width="18" height="16" viewBox="0 0 18 16"><path d="M1 6a12 12 0 0 1 16 0M4 9a8 8 0 0 1 10 0M6.5 12a4 4 0 0 1 5 0" stroke="#ddd" stroke-width="1.8" fill="none"/><circle cx="9" cy="14" r="1.5" fill="#ddd"/></svg>
<svg style="left:2453px;top:4px;" width="12" height="18" viewBox="0 0 12 18"><path d="M2 5l8 8-4 4V1l4 4-8 8" stroke="#ddd" stroke-width="1.6" fill="none"/></svg>
<svg style="left:2478px;top:5px;" width="18" height="16" viewBox="0 0 18 16"><path d="M1 5h4l5-4v14l-5-4H1z" fill="#ddd"/><path d="M12 4a5 5 0 0 1 0 8M14 2a8 8 0 0 1 0 12" stroke="#ddd" stroke-width="1.4" fill="none"/></svg>
<svg style="left:2509px;top:3px;" width="14" height="20" viewBox="0 0 14 20"><rect x="1" y="3" width="12" height="16" rx="1" stroke="#ddd" stroke-width="1.6" fill="none"/><rect x="4" y="1" width="6" height="2" fill="#ddd"/><path d="M8 6l-3 6h4l-3 5" stroke="#ddd" stroke-width="1.4" fill="none"/></svg>
<svg style="left:2533px;top:10px;" width="13" height="8" viewBox="0 0 13 8"><path d="M0 0h13L6.5 7z" fill="#ddd"/></svg>
<div style="left:0px;top:27px;width:67px;height:1408px;background:linear-gradient(180deg,#4a353a,#413135)"></div>
<div style="left:2px;top:28px;width:62px;height:62px;background:#6a5557;border-radius:5px"></div>
<div style="left:2.3px;top:43.599999999999994px;width:5.4px;height:5.4px;border-radius:50%;background:#ee5e23"></div>
<div style="left:2.3px;top:51.9px;width:5.4px;height:5.4px;border-radius:50%;background:#ee5e23"></div>
<div style="left:2.3px;top:60.199999999999996px;width:5.4px;height:5.4px;border-radius:50%;background:#ee5e23"></div>
<div style="left:2.3px;top:68.6px;width:5.4px;height:5.4px;border-radius:50%;background:#ee5e23"></div>
<svg style="left:9px;top:34px;" width="48" height="48" viewBox="0 0 48 48"><defs><radialGradient id="ffo" cx="30%" cy="70%" r="80%"><stop offset="0" stop-color="#ffbd2e"/><stop offset=".5" stop-color="#ff6d1f"/><stop offset="1" stop-color="#e3175a"/></radialGradient></defs><circle cx="25" cy="26" r="21" fill="url(#ffo)"/><circle cx="26" cy="25" r="12" fill="#3653d6"/><path d="M28 3c8 4 14 12 14 22 0 10-8 18-18 18-7 0-13-4-15-10 4 5 11 6 16 3 6-4 7-12 3-17-2-3-5-4-8-3 3-5 6-9 8-13z" fill="#ffd43a"/><path d="M6 18c2-6 6-10 10-12-1 3 0 5 2 6-5 1-8 4-9 8z" fill="#ff5a2a"/></svg>
<svg style="left:9px;top:99px;" width="48" height="48" viewBox="0 0 48 48"><circle cx="24" cy="25" r="21" fill="#1b62c9"/><path d="M8 26c-2-12 6-22 18-23 8 0 15 5 18 13-3-3-8-4-12-2-5 2-7 6-6 10z" fill="#56a6f0"/><path d="M30 3c3 1 6 3 8 6" stroke="#2a7ee0" stroke-width="3"/><path d="M9 22l22-9 9 18-22 10z" fill="#fff"/><path d="M9 22l14 8 17 1" stroke="#c9ccd2" stroke-width="1.5" fill="none"/><path d="M10 38c6 6 18 8 27 2" stroke="#0e3f99" stroke-width="3" fill="none"/></svg>
<svg style="left:12px;top:164px;" width="42" height="45" viewBox="0 0 42 45"><rect x="1" y="1" width="40" height="43" rx="3" fill="#9a9996"/><rect x="1" y="1" width="40" height="5" rx="2" fill="#cfcecb"/><rect x="4" y="6" width="34" height="7" fill="#2e2d2b"/><rect x="5" y="8" width="32" height="5" fill="#f29b4c"/><rect x="5" y="9" width="32" height="1.5" fill="#fcd9a5"/><rect x="3" y="14" width="36" height="29" rx="2" fill="#b5b4b1"/><rect x="15" y="24" width="12" height="7" rx="1.5" fill="#e8e8e6" stroke="#6c6b68" stroke-width="1.5"/></svg>
<div style="left:2.3px;top:184.3px;width:5.4px;height:5.4px;border-radius:50%;background:#ee5e23"></div>
<svg style="left:13px;top:226px;" width="41" height="49" viewBox="0 0 41 49"><path d="M3 3h26l10 10v33H3z" fill="#fff" stroke="#1c5a8f" stroke-width="3"/><path d="M28 1h12v12z" fill="#1c5a8f"/><rect x="19" y="17" width="13" height="9" fill="#1c5a8f"/><path d="M20 25l4-4 3 2 4-4v6z" fill="#c9dcec"/><circle cx="28" cy="20" r="1.5" fill="#f4d35e"/><path d="M8 18h8M8 22h8M8 26h8M8 31h24M8 35h24M8 39h14" stroke="#1c5a8f" stroke-width="2"/></svg>
<div style="left:2.3px;top:247.8px;width:5.4px;height:5.4px;border-radius:50%;background:#ee5e23"></div>
<svg style="left:11px;top:292px;" width="44" height="45" viewBox="0 0 44 45"><path d="M14 10V6a4 4 0 0 1 4-4h8a4 4 0 0 1 4 4v4" stroke="#e35f1f" stroke-width="3" fill="none"/><path d="M3 8h38l2 36H1z" fill="#f07c3a"/><path d="M3 8h38l.5 6H2.5z" fill="#f49a5f"/><path d="M22 15l-9 20h5l4-9 4 9h5z" fill="#fff"/><rect x="13" y="26" width="18" height="4" rx="1" fill="#fff"/><rect x="15" y="27" width="14" height="2" fill="#f07c3a"/></svg>
<svg style="left:13px;top:360px;" width="40" height="40" viewBox="0 0 40 40"><defs><radialGradient id="hg" cx="40%" cy="30%" r="75%"><stop offset="0" stop-color="#6ba6dd"/><stop offset="1" stop-color="#2c629e"/></radialGradient></defs><circle cx="20" cy="20" r="19.5" fill="url(#hg)"/><text x="20" y="31" font-size="30" font-weight="bold" text-anchor="middle" fill="#fff" font-family="Liberation Sans">?</text></svg>
<svg style="left:12px;top:422px;" width="42" height="42" viewBox="0 0 42 42"><circle cx="21" cy="21" r="21" fill="#fff"/><rect x="9" y="17" width="14" height="5" rx="2.5" fill="#36c5f0"/><rect x="17" y="8" width="5" height="14" rx="2.5" fill="#2eb67d"/><rect x="21" y="21" width="14" height="5" rx="2.5" fill="#ecb22e"/><rect x="21" y="21" width="5" height="14" rx="2.5" fill="#e01e5a"/><rect x="22" y="9" width="5" height="9" rx="2.5" fill="#2eb67d"/><rect x="27" y="16" width="7" height="5" rx="2.5" fill="#2eb67d"/><rect x="8" y="22" width="8" height="5" rx="2.5" fill="#e01e5a"/><rect x="16" y="25" width="5" height="9" rx="2.5" fill="#e01e5a"/><rect x="26" y="26" width="5" height="7" rx="2.5" fill="#ecb22e"/></svg>
<div style="left:2.3px;top:440.0px;width:5.4px;height:5.4px;border-radius:50%;background:#ee5e23"></div>
<svg style="left:11px;top:485px;" width="44" height="44" viewBox="0 0 44 44"><circle cx="22" cy="22" r="22" fill="#db4437"/><path d="M22 22L3 33A22 22 0 0 0 24 44z" fill="#0f9d58"/><path d="M3 33A22 22 0 0 1 3 11L13 27z" fill="#0f9d58"/><path d="M22 22L24 44A22 22 0 0 0 43.5 18z" fill="#f4b400"/><path d="M22 12h21.5A22 22 0 0 1 44 22 22 22 0 0 1 24 44L31 27z" fill="#f4b400"/><circle cx="22" cy="22" r="10" fill="#fff"/><circle cx="22" cy="22" r="8" fill="#4285f4"/></svg>
<div style="left:2.3px;top:504.1px;width:5.4px;height:5.4px;border-radius:50%;background:#ee5e23"></div>
<svg style="left:13px;top:547px;" width="40" height="46" viewBox="0 0 40 46"><path d="M20 1l19 11v22L20 45 1 34V12z" fill="#cfcfcf" stroke="#9e9e9e"/><path d="M20 5l15 9v18L20 41 5 32V14z" fill="#e9e9e9"/><path d="M9 13h22v6L17 31h14v7H9v-6l14-12H9z" fill="#c5262c"/></svg>
<div style="left:2.3px;top:568.0px;width:5.4px;height:5.4px;border-radius:50%;background:#ee5e23"></div>
<svg style="left:12px;top:608px;" width="44" height="52" viewBox="0 0 44 52"><defs><radialGradient id="yg" cx="35%" cy="35%" r="70%"><stop offset="0" stop-color="#d6e6f8"/><stop offset="1" stop-color="#4d86c9"/></radialGradient></defs><circle cx="22" cy="33" r="19" fill="url(#yg)"/><path d="M15 5c4 0 8 10 9 22M37 3c-6 12-14 30-26 45" stroke="#111" stroke-width="4" fill="none" stroke-linecap="round"/></svg>
<svg style="left:10px;top:681px;" width="46" height="38" viewBox="0 0 46 38"><rect x="1" y="1" width="44" height="36" rx="2" fill="#d4d4d4" stroke="#aaa"/><rect x="4" y="4" width="38" height="30" fill="#262626"/><path d="M9 9l7 5-7 5" stroke="#fff" stroke-width="2.4" fill="none"/><path d="M17 22h8" stroke="#fff" stroke-width="2.4"/></svg>
<div style="left:2.3px;top:691.9px;width:5.4px;height:5.4px;border-radius:50%;background:#ee5e23"></div>
<div style="left:2.3px;top:700.0999999999999px;width:5.4px;height:5.4px;border-radius:50%;background:#ee5e23"></div>
<svg style="left:12px;top:741px;" width="44" height="42" viewBox="0 0 44 42"><path d="M4 15h34l4 14v10H2V29z" fill="#e8c62a"/><path d="M2 29h40v10H2z" fill="#f2d43a"/><path d="M3 32h38M3 36h38" stroke="#caa315" stroke-width="1"/><path d="M5 15h32l4 14H3z" fill="#f6e04c"/><path d="M13 26L34 5l4 4-21 21-6 2z" fill="#d9a050" stroke="#6d4a1a" stroke-width="1"/><path d="M34 5l4 4 2-2-4-4z" fill="#e03a3a"/></svg>
<div style="left:2.3px;top:747.5999999999999px;width:5.4px;height:5.4px;border-radius:50%;background:#ee5e23"></div>
<div style="left:2.3px;top:756.0999999999999px;width:5.4px;height:5.4px;border-radius:50%;background:#ee5e23"></div>
<div style="left:2.3px;top:764.3px;width:5.4px;height:5.4px;border-radius:50%;background:#ee5e23"></div>
<div style="left:2.3px;top:772.9px;width:5.4px;height:5.4px;border-radius:50%;background:#ee5e23"></div>
<svg style="left:12px;top:806px;" width="42" height="42" viewBox="0 0 42 42"><defs><linearGradient id="ag" x1="0" y1="0" x2="0" y2="1"><stop offset="0" stop-color="#7fd3a7"/><stop offset="1" stop-color="#1d9d69"/></linearGradient></defs><circle cx="21" cy="21" r="20.5" fill="#e9f3ee"/><circle cx="21" cy="21" r="18.5" fill="url(#ag)"/><g stroke="#fff" stroke-width="1.5" fill="none"><ellipse cx="21" cy="21" rx="13" ry="5"/><ellipse cx="21" cy="21" rx="13" ry="5" transform="rotate(60 21 21)"/><ellipse cx="21" cy="21" rx="13" ry="5" transform="rotate(-60 21 21)"/></g><circle cx="21" cy="21" r="2" fill="#fff"/></svg>
<div style="left:2.3px;top:824.0px;width:5.4px;height:5.4px;border-radius:50%;background:#ee5e23"></div>
<svg style="left:13px;top:869px;" width="42" height="42" viewBox="0 0 42 42"><rect x="1" y="1" width="40" height="40" rx="6" fill="#f4f4f4" stroke="#d0d0d0"/><path d="M6 24c8-2 20-14 22-18 2-4-10-4-12 4-2 6 2 12 8 12 6 0 12-4 16-6" stroke="#d21f2b" stroke-width="2" fill="none"/><path d="M14 28c8 0 18-6 26-9" stroke="#e77" stroke-width="2.5" fill="none"/><path d="M10 32h22M10 35h22" stroke="#bbb" stroke-width="1"/></svg>
<div style="left:2.3px;top:875.5999999999999px;width:5.4px;height:5.4px;border-radius:50%;background:#ee5e23"></div>
<div style="left:2.3px;top:884.0999999999999px;width:5.4px;height:5.4px;border-radius:50%;background:#ee5e23"></div>
<div style="left:2.3px;top:892.5px;width:5.4px;height:5.4px;border-radius:50%;background:#ee5e23"></div>
<div style="left:2.3px;top:900.9px;width:5.4px;height:5.4px;border-radius:50%;background:#ee5e23"></div>
<svg style="left:12px;top:935px;" width="46" height="38" viewBox="0 0 46 38"><rect x="2" y="4" width="34" height="33" fill="#f8f8f8" stroke="#bdbdbd"/><rect x="2" y="33" width="34" height="4" fill="#dcdcdc"/><g stroke="#555" stroke-width="1.5"><path d="M5 1v6"/><path d="M9 1v6"/><path d="M13 1v6"/><path d="M17 1v6"/><path d="M21 1v6"/><path d="M25 1v6"/><path d="M29 1v6"/><path d="M33 1v6"/></g><path d="M6 12h10M19 12h12M6 17h6M15 17h14M6 22h20M6 27h8M17 27h10" stroke="#aaa" stroke-width="1.3"/><path d="M20 30L40 10l4 4-20 20-6 2z" fill="#f0a030" stroke="#6d4a1a" stroke-width="1"/><path d="M40 10l4 4 2-2-4-4z" fill="#e04040"/></svg>
<div style="left:2.3px;top:952.0999999999999px;width:5.4px;height:5.4px;border-radius:50%;background:#ee5e23"></div>
<div style="left:17.7px;top:1393.1000000000001px;width:6.2px;height:6.2px;border-radius:50%;background:#eeeeec"></div>
<div style="left:29.799999999999997px;top:1393.1000000000001px;width:6.2px;height:6.2px;border-radius:50%;background:#eeeeec"></div>
<div style="left:42.0px;top:1393.1000000000001px;width:6.2px;height:6.2px;border-radius:50%;background:#eeeeec"></div>
<div style="left:17.7px;top:1405.0px;width:6.2px;height:6.2px;border-radius:50%;background:#eeeeec"></div>
<div style="left:29.799999999999997px;top:1405.0px;width:6.2px;height:6.2px;border-radius:50%;background:#eeeeec"></div>
<div style="left:42.0px;top:1405.0px;width:6.2px;height:6.2px;border-radius:50%;background:#eeeeec"></div>
<div style="left:17.7px;top:1416.9px;width:6.2px;height:6.2px;border-radius:50%;background:#eeeeec"></div>
<div style="left:29.799999999999997px;top:1416.9px;width:6.2px;height:6.2px;border-radius:50%;background:#eeeeec"></div>
<div style="left:42.0px;top:1416.9px;width:6.2px;height:6.2px;border-radius:50%;background:#eeeeec"></div>
<div style="left:2560px;top:484px;width:1920px;height:1076px;background:#5a0a3c"></div>
<div style="left:2560px;top:484px;width:640px;height:1076px;background:linear-gradient(205deg,#b72c2a 0%,#9e1d3d 28%,#7e0e48 52%,#5e0a3d 76%,#3e0630 100%)"></div>
<div style="left:2560px;top:1336px;width:160px;height:7px;background:rgba(170,40,110,.35);border-radius:50%/100% 100% 0 0"></div>
<div style="left:2560px;top:1477px;width:640px;height:11px;background:rgba(170,20,110,.45)"></div>
<div style="left:2818px;top:532px;width:400px;height:200px;background:#2e3436;border-radius:6px 6px 0 0;box-shadow:0 0 10px rgba(0,0,0,.5)"></div>
<div style="left:2818px;top:532px;width:400px;height:31px;background:#3c3b37;border-radius:6px 6px 0 0"></div>
<div style="left:3060px;top:537.0px;font-size:15px;line-height:20px;color:#a29f98;font-family:'Liberation Sans', sans-serif;font-weight:bold;white-space:pre;">andrew@andrew-ltp: ~</div>
<div style="left:2818px;top:563px;width:400px;height:23px;background:#3f3e3a"></div>
<div style="left:2824.2px;top:565.1px;font-size:14.5px;line-height:19px;color:#c8c5be;font-family:'Liberation Sans', sans-serif;white-space:pre;">File</div>
<div style="left:2860.3px;top:565.1px;font-size:14.5px;line-height:19px;color:#c8c5be;font-family:'Liberation Sans', sans-serif;white-space:pre;">Edit</div>
<div style="left:2899.1px;top:565.1px;font-size:14.5px;line-height:19px;color:#c8c5be;font-family:'Liberation Sans', sans-serif;white-space:pre;">View</div>
<div style="left:2944px;top:565.1px;font-size:14.5px;line-height:19px;color:#c8c5be;font-family:'Liberation Sans', sans-serif;white-space:pre;">Search</div>
<div style="left:3001.5px;top:565.1px;font-size:14.5px;line-height:19px;color:#c8c5be;font-family:'Liberation Sans', sans-serif;white-space:pre;">Terminal</div>
<div style="left:3071.5px;top:565.1px;font-size:14.5px;line-height:19px;color:#c8c5be;font-family:'Liberation Sans', sans-serif;white-space:pre;">Help</div>
<div style="left:2818px;top:586px;width:400px;height:150px;background:#2b3033"></div>
<div style="left:2819px;top:587px;font-family:'Liberation Mono',monospace;font-size:14.9px;line-height:18px;white-space:pre"><span style="color:#8ae234;font-weight:bold">andrew@andrew-ltp</span><span style="color:#d3d7cf;">:</span><span style="color:#729fcf;font-weight:bold">~</span><span style="color:#d3d7cf;">$ ls</span></div>
<div style="left:2819px;top:605px;font-family:'Liberation Mono',monospace;font-size:14.9px;line-height:18px;white-space:pre"><span style="color:#729fcf;font-weight:bold">anaconda3  </span><span style="color:#729fcf;font-weight:bold">Dropbox           </span><span style="color:#d3d7cf;">output.pdf  </span><span style="color:#729fcf;font-weight:bold">s</span></div>
<div style="left:2819px;top:623px;font-family:'Liberation Mono',monospace;font-size:14.9px;line-height:18px;white-space:pre"><span style="color:#729fcf;font-weight:bold">bin        </span><span style="color:#d3d7cf;">examples.desktop  </span><span style="color:#d3d7cf;">out.txt     </span><span style="color:#729fcf;font-weight:bold">s</span></div>
<div style="left:2819px;top:641px;font-family:'Liberation Mono',monospace;font-size:14.9px;line-height:18px;white-space:pre"><span style="color:#34e2e2;font-weight:bold">data       </span><span style="color:#729fcf;font-weight:bold">gems              </span><span style="color:#729fcf;font-weight:bold">Pictures    </span><span style="color:#729fcf;font-weight:bold">T</span></div>
<div style="left:2819px;top:659px;font-family:'Liberation Mono',monospace;font-size:14.9px;line-height:18px;white-space:pre"><span style="color:#729fcf;font-weight:bold">Desktop    </span><span style="color:#d3d7cf;">log.txt           </span><span style="color:#729fcf;font-weight:bold">Public      </span><span style="color:#729fcf;font-weight:bold">tu</span></div>
<div style="left:3199px;top:484px;width:1281px;height:1076px;background:#fff;border-left:1px solid #b9b9b9"></div>
<div style="left:3200px;top:484px;width:1280px;height:39px;background:#dee1e6"></div>
<div style="left:4220.7px;top:488px;width:73px;height:35px;background:#fff;border-radius:6px 6px 0 0"></div>
<svg style="left:3219.5px;top:498px;" width="17" height="16" viewBox="0 0 17 16"><path d="M1 2v12h3V6l5 4 5-4v8h3V2l-8 6z" fill="#ea4335"/><text x="12" y="15" font-size="8" fill="#000" font-family="Liberation Sans">0</text></svg>
<div style="left:3243.5px;top:496px;width:41.0px;height:20px;overflow:hidden;font-size:15px;line-height:20px;white-space:pre;color:#3c4043;-webkit-mask-image:linear-gradient(90deg,#000 70%,transparent)">Inbox</div>
<svg style="left:3291.55px;top:498px;" width="16" height="16" viewBox="0 0 16 16"><circle cx="8" cy="8" r="7" stroke="#222" stroke-width="1.6" fill="none"/><path d="M4 11l4-6 4 6z" fill="#222"/></svg>
<div style="left:3315.55px;top:496px;width:41.0px;height:20px;overflow:hidden;font-size:15px;line-height:20px;white-space:pre;color:#3c4043;-webkit-mask-image:linear-gradient(90deg,#000 70%,transparent)">Libra</div>
<div style="left:3285.55px;top:496px;width:1px;height:20px;background:#9aa0a6"></div>
<div style="left:3366.6px;top:496px;width:62.0px;height:20px;overflow:hidden;font-size:15px;line-height:20px;white-space:pre;color:#3c4043;-webkit-mask-image:linear-gradient(90deg,#000 70%,transparent)">New Tab</div>
<div style="left:3357.6px;top:496px;width:1px;height:20px;background:#9aa0a6"></div>
<svg style="left:3435.65px;top:498px;" width="16" height="16" viewBox="0 0 16 16"><path d="M8 3.5a4.5 4.5 0 1 0 4.4 5.3H8V7h6.2" stroke="#4285f4" stroke-width="2.3" fill="none"/><path d="M4.3 5.3a4.5 4.5 0 0 1 6.5-1" stroke="#ea4335" stroke-width="2.3" fill="none"/><path d="M3.6 9a4.5 4.5 0 0 0 1.9 3.2" stroke="#fbbc05" stroke-width="2.3" fill="none"/><path d="M5.6 12.5a4.5 4.5 0 0 0 5.9-.6" stroke="#34a853" stroke-width="2.3" fill="none"/></svg>
<div style="left:3459.65px;top:496px;width:41.0px;height:20px;overflow:hidden;font-size:15px;line-height:20px;white-space:pre;color:#3c4043;-webkit-mask-image:linear-gradient(90deg,#000 70%,transparent)">amo</div>
<div style="left:3429.65px;top:496px;width:1px;height:20px;background:#9aa0a6"></div>
<svg style="left:3507.7px;top:498px;" width="16" height="16" viewBox="0 0 16 16"><path d="M8 3.5a4.5 4.5 0 1 0 4.4 5.3H8V7h6.2" stroke="#4285f4" stroke-width="2.3" fill="none"/><path d="M4.3 5.3a4.5 4.5 0 0 1 6.5-1" stroke="#ea4335" stroke-width="2.3" fill="none"/><path d="M3.6 9a4.5 4.5 0 0 0 1.9 3.2" stroke="#fbbc05" stroke-width="2.3" fill="none"/><path d="M5.6 12.5a4.5 4.5 0 0 0 5.9-.6" stroke="#34a853" stroke-width="2.3" fill="none"/></svg>
<div style="left:3531.7px;top:496px;width:41.0px;height:20px;overflow:hidden;font-size:15px;line-height:20px;white-space:pre;color:#3c4043;-webkit-mask-image:linear-gradient(90deg,#000 70%,transparent)">user</div>
<div style="left:3501.7px;top:496px;width:1px;height:20px;background:#9aa0a6"></div>
<svg style="left:3579.75px;top:498px;" width="16" height="16" viewBox="0 0 16 16"><path d="M8 3.5a4.5 4.5 0 1 0 4.4 5.3H8V7h6.2" stroke="#4285f4" stroke-width="2.3" fill="none"/><path d="M4.3 5.3a4.5 4.5 0 0 1 6.5-1" stroke="#ea4335" stroke-width="2.3" fill="none"/><path d="M3.6 9a4.5 4.5 0 0 0 1.9 3.2" stroke="#fbbc05" stroke-width="2.3" fill="none"/><path d="M5.6 12.5a4.5 4.5 0 0 0 5.9-.6" stroke="#34a853" stroke-width="2.3" fill="none"/></svg>
<div style="left:3603.75px;top:496px;width:41.0px;height:20px;overflow:hidden;font-size:15px;line-height:20px;white-space:pre;color:#3c4043;-webkit-mask-image:linear-gradient(90deg,#000 70%,transparent)">&quot;use</div>
<div style="left:3573.75px;top:496px;width:1px;height:20px;background:#9aa0a6"></div>
<svg style="left:3651.8px;top:498px;" width="16" height="16" viewBox="0 0 16 16"><path d="M8 2l8 5-8 5-8-5z" fill="#4a7fe0"/><path d="M4 10v3c2 2 6 2 8 0v-3" fill="#7aa2ef"/></svg>
<div style="left:3675.8px;top:496px;width:41.0px;height:20px;overflow:hidden;font-size:15px;line-height:20px;white-space:pre;color:#3c4043;-webkit-mask-image:linear-gradient(90deg,#000 70%,transparent)">&quot;use</div>
<div style="left:3645.8px;top:496px;width:1px;height:20px;background:#9aa0a6"></div>
<svg style="left:3723.85px;top:498px;" width="16" height="16" viewBox="0 0 16 16"><rect x="2" y="2" width="12" height="12" fill="#6a4"/><circle cx="8" cy="8" r="4" fill="#a33"/></svg>
<div style="left:3747.85px;top:496px;width:41.0px;height:20px;overflow:hidden;font-size:15px;line-height:20px;white-space:pre;color:#3c4043;-webkit-mask-image:linear-gradient(90deg,#000 70%,transparent)">User</div>
<div style="left:3717.85px;top:496px;width:1px;height:20px;background:#9aa0a6"></div>
<svg style="left:3795.9px;top:498px;" width="16" height="16" viewBox="0 0 16 16"><path d="M8 3.5a4.5 4.5 0 1 0 4.4 5.3H8V7h6.2" stroke="#4285f4" stroke-width="2.3" fill="none"/><path d="M4.3 5.3a4.5 4.5 0 0 1 6.5-1" stroke="#ea4335" stroke-width="2.3" fill="none"/><path d="M3.6 9a4.5 4.5 0 0 0 1.9 3.2" stroke="#fbbc05" stroke-width="2.3" fill="none"/><path d="M5.6 12.5a4.5 4.5 0 0 0 5.9-.6" stroke="#34a853" stroke-width="2.3" fill="none"/></svg>
<div style="left:3819.9px;top:496px;width:41.0px;height:20px;overflow:hidden;font-size:15px;line-height:20px;white-space:pre;color:#3c4043;-webkit-mask-image:linear-gradient(90deg,#000 70%,transparent)">quar</div>
<div style="left:3789.9px;top:496px;width:1px;height:20px;background:#9aa0a6"></div>
<div style="left:3870.95px;top:496px;width:62.0px;height:20px;overflow:hidden;font-size:15px;line-height:20px;white-space:pre;color:#3c4043;-webkit-mask-image:linear-gradient(90deg,#000 70%,transparent)">New Tab</div>
<div style="left:3861.95px;top:496px;width:1px;height:20px;background:#9aa0a6"></div>
<svg style="left:3940.0px;top:498px;" width="16" height="16" viewBox="0 0 16 16"><path d="M8 2l8 5-8 5-8-5z" fill="#4a7fe0"/><path d="M4 10v3c2 2 6 2 8 0v-3" fill="#7aa2ef"/></svg>
<div style="left:3964.0px;top:496px;width:41.0px;height:20px;overflow:hidden;font-size:15px;line-height:20px;white-space:pre;color:#3c4043;-webkit-mask-image:linear-gradient(90deg,#000 70%,transparent)">CogT</div>
<div style="left:3934.0px;top:496px;width:1px;height:20px;background:#9aa0a6"></div>
<svg style="left:4012.05px;top:498px;" width="16" height="16" viewBox="0 0 16 16"><circle cx="9" cy="6" r="4" fill="#bbb"/><path d="M7 9l-4 6" stroke="#999" stroke-width="2"/></svg>
<div style="left:4036.05px;top:496px;width:41.0px;height:20px;overflow:hidden;font-size:15px;line-height:20px;white-space:pre;color:#3c4043;-webkit-mask-image:linear-gradient(90deg,#000 70%,transparent)">10-B</div>
<div style="left:4006.05px;top:496px;width:1px;height:20px;background:#9aa0a6"></div>
<svg style="left:4084.1px;top:498px;" width="16" height="16" viewBox="0 0 16 16"><circle cx="8" cy="8" r="6.5" stroke="#c9a227" stroke-width="1.5" fill="#f0e6a0"/><circle cx="8" cy="8" r="3" fill="#7a6a20"/></svg>
<div style="left:4108.1px;top:496px;width:41.0px;height:20px;overflow:hidden;font-size:15px;line-height:20px;white-space:pre;color:#3c4043;-webkit-mask-image:linear-gradient(90deg,#000 70%,transparent)">Proc</div>
<div style="left:4078.1px;top:496px;width:1px;height:20px;background:#9aa0a6"></div>
<svg style="left:4156.15px;top:498px;" width="16" height="16" viewBox="0 0 16 16"><circle cx="8" cy="8" r="6.5" stroke="#c9a227" stroke-width="1.5" fill="#f0e6a0"/><circle cx="8" cy="8" r="3" fill="#7a6a20"/></svg>
<div style="left:4180.15px;top:496px;width:41.0px;height:20px;overflow:hidden;font-size:15px;line-height:20px;white-space:pre;color:#3c4043;-webkit-mask-image:linear-gradient(90deg,#000 70%,transparent)">a538</div>
<div style="left:4150.15px;top:496px;width:1px;height:20px;background:#9aa0a6"></div>
<svg style="left:4230px;top:498px;" width="16" height="16" viewBox="0 0 16 16"><path d="M8 3.5a4.5 4.5 0 1 0 4.4 5.3H8V7h6.2" stroke="#4285f4" stroke-width="2.3" fill="none"/><path d="M4.3 5.3a4.5 4.5 0 0 1 6.5-1" stroke="#ea4335" stroke-width="2.3" fill="none"/><path d="M3.6 9a4.5 4.5 0 0 0 1.9 3.2" stroke="#fbbc05" stroke-width="2.3" fill="none"/><path d="M5.6 12.5a4.5 4.5 0 0 0 5.9-.6" stroke="#34a853" stroke-width="2.3" fill="none"/></svg>
<div style="left:4254px;top:496.0px;font-size:15px;line-height:20px;color:#3c4043;font-family:'Liberation Sans', sans-serif;white-space:pre;">de</div>
<svg style="left:4273px;top:500px;" width="12" height="12" viewBox="0 0 12 12"><path d="M1 1l10 10M11 1L1 11" stroke="#3c4043" stroke-width="1.6"/></svg>
<svg style="left:4307px;top:498px;" width="16" height="16" viewBox="0 0 16 16"><path d="M8 1v14M1 8h14" stroke="#3c4043" stroke-width="1.8"/></svg>
<svg style="left:4388px;top:496px;" width="14" height="14" viewBox="0 0 14 14"><path d="M1 8h12" stroke="#9aa0a6" stroke-width="1.3"/></svg>
<svg style="left:4421px;top:495px;" width="12" height="12" viewBox="0 0 12 12"><rect x="1" y="1" width="10" height="10" stroke="#9aa0a6" stroke-width="1.3" fill="none"/></svg>
<svg style="left:4454px;top:495px;" width="12" height="12" viewBox="0 0 12 12"><path d="M1 1l10 10M11 1L1 11" stroke="#9aa0a6" stroke-width="1.3"/></svg>
<svg style="left:3218px;top:530px;" width="90" height="22" viewBox="0 0 90 22"><path d="M18 11H3M9 4L2 11l7 7" stroke="#5f6368" stroke-width="2" fill="none"/><path d="M30 11h15M38 4l7 7-7 7" stroke="#bdc1c6" stroke-width="2" fill="none"/><path d="M76 6a7 7 0 1 0 2 6" stroke="#5f6368" stroke-width="2.2" fill="none"/><path d="M72 2h7v7z" fill="#5f6368"/></svg>
<div style="left:3312.7px;top:526.6px;width:1087.3px;height:28.2px;background:#f1f3f4;border-radius:14px"></div>
<svg style="left:3323px;top:533px;" width="12" height="15" viewBox="0 0 12 15"><rect x="1" y="6" width="10" height="8" rx="1" fill="#5f6368"/><path d="M3 6V4a3 3 0 0 1 6 0v2" stroke="#5f6368" stroke-width="1.6" fill="none"/></svg>
<div id="f70" style="left:3345px;top:531px;white-space:pre;font-size:15px;line-height:20px;color:#6b6f73;transform:scaleX(0.9555);transform-origin:0 0;">https://<span style="color:#202124">www.google.com</span>/search?q=define+exasperated&amp;oq=define+exasperated&amp;aqs=chrome</div>
<div style="left:3942.5px;top:531.7px;width:327px;height:18px;background:#000"></div>
<div id="f71" style="left:4270px;top:531.0px;font-size:15px;line-height:20px;color:#6b6f73;font-family:'Liberation Sans', sans-serif;transform:scaleX(0.8638);transform-origin:0 0;white-space:pre;">&amp;ie=UTF-8</div>
<svg style="left:4373px;top:532px;" width="18" height="18" viewBox="0 0 18 18"><path d="M9 1.5l2.3 5 5.2.5-4 3.5 1.2 5.2L9 13l-4.7 2.7 1.2-5.2-4-3.5 5.2-.5z" stroke="#5f6368" stroke-width="1.5" fill="none"/></svg>
<div style="left:4411.6px;top:531px;width:20px;height:20px;border-radius:50%;background:radial-gradient(ellipse 45% 55% at 50% 48%,#d9a88a 0 60%,transparent 62%),linear-gradient(180deg,#6b4a32 0%,#6b4a32 30%,#e6d6cc 30%,#e6d6cc 75%,#3f4450 75%)"></div>
<svg style="left:4451px;top:532px;" width="8" height="18" viewBox="0 0 8 18"><circle cx="4" cy="3" r="1.8" fill="#5f6368"/><circle cx="4" cy="9" r="1.8" fill="#5f6368"/><circle cx="4" cy="15" r="1.8" fill="#5f6368"/></svg>
<svg style="left:3217px;top:566px;" width="16" height="16" viewBox="0 0 16 16"><rect x="1" y="1" width="3.5" height="3.5" fill="#ea4335"/><rect x="6" y="1" width="3.5" height="3.5" fill="#ea4335"/><rect x="11" y="1" width="3.5" height="3.5" fill="#ea4335"/><rect x="1" y="6" width="3.5" height="3.5" fill="#34a853"/><rect x="6" y="6" width="3.5" height="3.5" fill="#4285f4"/><rect x="11" y="6" width="3.5" height="3.5" fill="#fbbc05"/><rect x="1" y="11" width="3.5" height="3.5" fill="#34a853"/><rect x="6" y="11" width="3.5" height="3.5" fill="#fbbc05"/><rect x="11" y="11" width="3.5" height="3.5" fill="#fbbc05"/></svg>
<div style="left:3241px;top:563.8px;font-size:15px;line-height:20px;color:#3c4043;font-family:'Liberation Sans', sans-serif;white-space:pre;">Apps</div>
<svg style="left:3291.4px;top:567px;" width="16" height="13" viewBox="0 0 16 13"><path d="M1 1h5l2 2h7v9H1z" fill="#5f6368"/></svg>
<div style="left:3316px;top:563.8px;font-size:15px;line-height:20px;color:#3c4043;font-family:'Liberation Sans', sans-serif;white-space:pre;">os</div>
<svg style="left:3347px;top:567px;" width="16" height="13" viewBox="0 0 16 13"><path d="M1 1h5l2 2h7v9H1z" fill="#5f6368"/></svg>
<div style="left:3372px;top:563.8px;font-size:15px;line-height:20px;color:#3c4043;font-family:'Liberation Sans', sans-serif;white-space:pre;">skillsets</div>
<svg style="left:3442.5px;top:567px;" width="16" height="13" viewBox="0 0 16 13"><path d="M1 1h5l2 2h7v9H1z" fill="#5f6368"/></svg>
<div style="left:3467.5px;top:563.8px;font-size:15px;line-height:20px;color:#3c4043;font-family:'Liberation Sans', sans-serif;white-space:pre;">mac_setup</div>
<svg style="left:3556.8px;top:567px;" width="16" height="13" viewBox="0 0 16 13"><path d="M1 1h5l2 2h7v9H1z" fill="#5f6368"/></svg>
<div style="left:3581px;top:563.8px;font-size:15px;line-height:20px;color:#3c4043;font-family:'Liberation Sans', sans-serif;white-space:pre;">executing_not...</div>
<svg style="left:3710.5px;top:567px;" width="16" height="13" viewBox="0 0 16 13"><path d="M1 1h5l2 2h7v9H1z" fill="#5f6368"/></svg>
<div style="left:3735px;top:563.8px;font-size:15px;line-height:20px;color:#3c4043;font-family:'Liberation Sans', sans-serif;white-space:pre;">afl</div>
<svg style="left:3768.4px;top:567px;" width="16" height="13" viewBox="0 0 16 13"><path d="M1 1h5l2 2h7v9H1z" fill="#5f6368"/></svg>
<div style="left:3793.3px;top:563.8px;font-size:15px;line-height:20px;color:#3c4043;font-family:'Liberation Sans', sans-serif;white-space:pre;">deakin</div>
<svg style="left:3854.5px;top:567px;" width="16" height="13" viewBox="0 0 16 13"><path d="M1 1h5l2 2h7v9H1z" fill="#5f6368"/></svg>
<div style="left:3879px;top:563.8px;font-size:15px;line-height:20px;color:#3c4043;font-family:'Liberation Sans', sans-serif;white-space:pre;">interesting</div>
<svg style="left:3970.3px;top:567px;" width="16" height="13" viewBox="0 0 16 13"><path d="M1 1h5l2 2h7v9H1z" fill="#5f6368"/></svg>
<div style="left:3995px;top:563.8px;font-size:15px;line-height:20px;color:#3c4043;font-family:'Liberation Sans', sans-serif;white-space:pre;">public transport</div>
<svg style="left:4121.5px;top:567px;" width="16" height="13" viewBox="0 0 16 13"><path d="M1 1h5l2 2h7v9H1z" fill="#5f6368"/></svg>
<div style="left:4146.4px;top:563.8px;font-size:15px;line-height:20px;color:#3c4043;font-family:'Liberation Sans', sans-serif;white-space:pre;">scientific_pro...</div>
<svg style="left:4275.2px;top:567px;" width="16" height="13" viewBox="0 0 16 13"><path d="M1 1h5l2 2h7v9H1z" fill="#5f6368"/></svg>
<div style="left:4300px;top:563.8px;font-size:15px;line-height:20px;color:#3c4043;font-family:'Liberation Sans', sans-serif;white-space:pre;">workflows</div>
<div style="left:4444px;top:563.0px;font-size:15px;line-height:20px;color:#5f6368;font-family:'Liberation Sans', sans-serif;white-space:pre;">»</div>
<div style="left:3200px;top:592px;width:1280px;height:1px;background:#a8a8a8"></div>
<svg style="left:3233px;top:617px;" width="100" height="38" viewBox="0 0 100 38"><text x="0" y="27" font-size="33" font-family="Liberation Sans" textLength="90" lengthAdjust="spacingAndGlyphs"><tspan fill="#4285f4">G</tspan><tspan fill="#ea4335">o</tspan><tspan fill="#fbbc05">o</tspan><tspan fill="#4285f4">g</tspan><tspan fill="#34a853">l</tspan><tspan fill="#ea4335">e</tspan></text></svg>
<div style="left:3349.5px;top:613.4px;width:640px;height:45px;background:#fff;border:1px solid #dfe1e5;border-radius:23px"></div>
<div style="left:3370px;top:625.0px;font-size:16px;line-height:21px;color:#222;font-family:'Liberation Sans', sans-serif;white-space:pre;">define exasperated</div>
<svg style="left:3908px;top:625px;" width="14" height="22" viewBox="0 0 14 22"><rect x="4" y="1" width="6" height="12" rx="3" fill="#4285f4"/><path d="M2 10a5 5 0 0 0 10 0" stroke="#4285f4" stroke-width="1.6" fill="none"/><path d="M7 15v4" stroke="#ea4335" stroke-width="2"/><rect x="5" y="13" width="4" height="3" fill="#fbbc05"/></svg>
<svg style="left:3949px;top:626px;" width="20" height="20" viewBox="0 0 20 20"><circle cx="8" cy="8" r="6" stroke="#4285f4" stroke-width="2.4" fill="none"/><path d="M12.5 12.5l6 6" stroke="#4285f4" stroke-width="2.6"/></svg>
<svg style="left:4362px;top:627px;" width="18" height="18" viewBox="0 0 18 18"><rect x="1" y="1" width="4" height="4" fill="#5f6368"/><rect x="7" y="1" width="4" height="4" fill="#5f6368"/><rect x="13" y="1" width="4" height="4" fill="#5f6368"/><rect x="1" y="7" width="4" height="4" fill="#5f6368"/><rect x="7" y="7" width="4" height="4" fill="#5f6368"/><rect x="13" y="7" width="4" height="4" fill="#5f6368"/><rect x="1" y="13" width="4" height="4" fill="#5f6368"/><rect x="7" y="13" width="4" height="4" fill="#5f6368"/><rect x="13" y="13" width="4" height="4" fill="#5f6368"/></svg>
<div style="left:4400px;top:620px;width:32px;height:32px;border-radius:50%;background:radial-gradient(ellipse 45% 55% at 50% 48%,#d9a88a 0 60%,transparent 62%),linear-gradient(180deg,#6b4a32 0%,#6b4a32 30%,#e6d6cc 30%,#e6d6cc 75%,#3f4450 75%)"></div>
<div style="left:4215px;top:715px;width:246px;height:1px;background:#ebebeb"></div>
<div style="left:4461px;top:593px;width:19px;height:967px;background:#f1f1f1;border-left:1px solid #e6e6e6"></div>
<div style="left:4463.6px;top:607.5px;width:10.5px;height:326px;background:#c1c1c1"></div>
<svg style="left:4464px;top:596px;" width="10" height="7" viewBox="0 0 10 7"><path d="M0 6h10L5 0z" fill="#a3a3a3"/></svg>
<div id="f72" style="left:3369px;top:1421px;white-space:pre;font-size:14px;line-height:19px;color:#545454;transform:scaleX(0.9271);transform-origin:0 0;"><b>Exasperated definition</b> is - having or showing strong feelings of irritation or annoyance. How to use</div>
<div id="f73" style="left:3369px;top:1441px;white-space:pre;font-size:14px;line-height:19px;color:#545454;transform:scaleX(0.9260);transform-origin:0 0;"><b>exasperated</b> in a sentence.</div>
<div id="f74" style="left:3369px;top:1485.8px;font-size:18px;line-height:23px;color:#660099;font-family:'Liberation Sans', sans-serif;transform:scaleX(1.0031);transform-origin:0 0;white-space:pre;">Exasperate | Definition of Exasperate by Merriam-Webster</div>
<div id="f75" style="left:3369px;top:1511.9px;font-size:14px;line-height:18px;color:#006621;font-family:'Liberation Sans', sans-serif;transform:scaleX(1.0254);transform-origin:0 0;white-space:pre;">https://www.merriam-webster.com/dictionary/exasperate ▾</div>
<div id="f76" style="left:3369px;top:1533px;white-space:pre;font-size:14px;line-height:19px;color:#545454;transform:scaleX(0.9266);transform-origin:0 0;"><b>Exasperate definition</b> is - to cause irritation or annoyance to. How to use <b>exasperate</b> in a sentence.</div>
<div style="left:3199px;top:1556px;width:1281px;height:4px;background:#e4e4e4"></div>
<div style="left:2701px;top:668px;width:1515px;height:762px;background:#f2f1f0;border-radius:6px 6px 0 0;box-shadow:0 2px 22px rgba(0,0,0,.45)"></div>
<div style="left:2701px;top:668px;width:1515px;height:42px;background:#3c3b37;border-radius:6px 6px 0 0"></div>
<div style="left:2711px;top:672.3px;width:139px;height:33px;background:#f3f2f1;border-radius:5px;border:1px solid #2a2a28"></div>
<div style="left:2755px;top:673px;width:1px;height:31px;background:#bdbcb8"></div>
<div style="left:2719px;top:679.0px;font-size:15px;line-height:20px;color:#444;font-family:'Liberation Sans', sans-serif;white-space:pre;">1</div>
<div style="left:2763px;top:679.0px;font-size:15px;line-height:20px;color:#8a8883;font-family:'Liberation Sans', sans-serif;white-space:pre;">of 159</div>
<div style="left:2866px;top:673px;width:64px;height:32px;background:#3a3935;border:1px solid #2e2d2a;border-radius:4px"></div>
<div style="left:2946px;top:673px;width:32px;height:32px;background:#3a3935;border:1px solid #2e2d2a;border-radius:4px"></div>
<div style="left:2994px;top:673px;width:32px;height:32px;background:#3a3935;border:1px solid #2e2d2a;border-radius:4px"></div>
<svg style="left:2875px;top:678px;" width="50" height="22" viewBox="0 0 50 22"><path d="M11 4 L5 11 L11 18" stroke="#c9c6bf" stroke-width="1.8" fill="none"/><path d="M38 4 L44 11 L38 18" stroke="#c9c6bf" stroke-width="1.8" fill="none"/></svg>
<svg style="left:2953px;top:679px;" width="20" height="20" viewBox="0 0 20 20"><circle cx="8" cy="8" r="5.5" stroke="#c9c6bf" stroke-width="2" fill="none"/><path d="M12 12 L17 17" stroke="#c9c6bf" stroke-width="2.2"/></svg>
<svg style="left:3002px;top:679px;" width="16" height="20" viewBox="0 0 16 20"><rect x="2" y="3" width="12" height="15" rx="1" stroke="#c9c6bf" stroke-width="1.6" fill="none"/><path d="M5 8h6M5 11h6M5 14h4M5 1v3M8 1v3M11 1v3" stroke="#c9c6bf" stroke-width="1.3"/></svg>
<div id="f77" style="left:3233.3px;top:678.5px;font-size:15px;line-height:20px;color:#8f8d87;font-family:'Liberation Sans', sans-serif;font-weight:bold;transform:scaleX(0.9992);transform-origin:0 0;white-space:pre;">John - IBM T. J. Watson Research Center Software Producti.pdf</div>
<div style="left:3953.2px;top:676.3px;width:91.3px;height:23.5px;background:#f4f3f2;border-radius:4px"></div>
<div style="left:3959px;top:679.0px;font-size:14px;line-height:18px;color:#333;font-family:'Liberation Sans', sans-serif;white-space:pre;">73.05%</div>
<svg style="left:4025px;top:682px;" width="14" height="12" viewBox="0 0 14 12"><path d="M2 3 L7 8 L12 3" stroke="#333" stroke-width="1.6" fill="none"/></svg>
<div style="left:4060px;top:673px;width:32.6px;height:32px;background:#3a3935;border:1px solid #2e2d2a;border-radius:4px"></div>
<div style="left:4103px;top:673px;width:31.7px;height:32px;background:#3a3935;border:1px solid #2e2d2a;border-radius:4px"></div>
<svg style="left:4068px;top:680px;" width="16" height="18" viewBox="0 0 16 18"><path d="M3 2h7l3 3v11H3z" stroke="#d6d3cc" stroke-width="1.6" fill="none"/><circle cx="8" cy="10" r="2.5" stroke="#d6d3cc" stroke-width="1.4" fill="none"/></svg>
<svg style="left:4111px;top:682px;" width="16" height="14" viewBox="0 0 16 14"><path d="M2 2h12M2 7h12M2 12h12" stroke="#d6d3cc" stroke-width="1.8"/></svg>
<div style="left:4150px;top:680.5px;width:16px;height:16px;border-radius:50%;background:#53524d"></div>
<div style="left:4170.7px;top:680.5px;width:16px;height:16px;border-radius:50%;background:#53524d"></div>
<div style="left:4190.7px;top:680.5px;width:16px;height:16px;border-radius:50%;background:#53524d"></div>
<svg style="left:4152px;top:682px;" width="54" height="13" viewBox="0 0 54 13"><path d="M2 6.5h8" stroke="#3a3935" stroke-width="1.4"/><rect x="23" y="3" width="7" height="7" stroke="#3a3935" stroke-width="1.2" fill="none"/><path d="M43 3.5l6 6M49 3.5l-6 6" stroke="#3a3935" stroke-width="1.3"/></svg>
<div style="left:2995.6px;top:752px;width:1px;height:678px;background:#c0beba"></div>
<div style="left:2701px;top:752.2px;width:294.6px;height:20.5px;background:#dcdad6"></div>
<div id="f78" style="left:2704.4px;top:753.5px;white-space:pre;font-size:14px;line-height:18px;color:#6f6d68;transform:scaleX(1.0550);transform-origin:0 0;">Cognitive <b style="color:#4a4945">Crash</b> Dummies courses at...</div>
<div id="f79" style="left:2970px;top:753.5px;font-size:14px;line-height:18px;color:#6f6d68;font-family:'Liberation Sans', sans-serif;font-style:italic;transform:scaleX(0.8978);transform-origin:0 0;white-space:pre;">7</div>
<div id="f80" style="left:2704.4px;top:776.3px;white-space:pre;font-size:14px;line-height:18px;color:#6f6d68;transform:scaleX(1.0471);transform-origin:0 0;">sometimes <b style="color:#4a4945">crash</b>. A CogTool crash g...</div>
<div id="f81" style="left:2969px;top:776.3px;font-size:14px;line-height:18px;color:#6f6d68;font-family:'Liberation Sans', sans-serif;font-style:italic;transform:scaleX(0.9846);transform-origin:0 0;white-space:pre;">140</div>
<div id="f82" style="left:2704.4px;top:799.1px;white-space:pre;font-size:14px;line-height:18px;color:#6f6d68;transform:scaleX(1.0545);transform-origin:0 0;">CogTool <b style="color:#4a4945">crash</b> generates an error wi...</div>
<div id="f83" style="left:2969px;top:799.1px;font-size:14px;line-height:18px;color:#6f6d68;font-family:'Liberation Sans', sans-serif;font-style:italic;transform:scaleX(0.9846);transform-origin:0 0;white-space:pre;">140</div>
<div id="f84" style="left:2704.4px;top:821.9px;white-space:pre;font-size:14px;line-height:18px;color:#6f6d68;transform:scaleX(1.0561);transform-origin:0 0;">CogTool <b style="color:#4a4945">crash</b>es result from bugs in ...</div>
<div id="f85" style="left:2969px;top:821.9px;font-size:14px;line-height:18px;color:#6f6d68;font-family:'Liberation Sans', sans-serif;font-style:italic;transform:scaleX(0.9846);transform-origin:0 0;white-space:pre;">140</div>
<div style="left:3297.3px;top:717.7px;width:322.7px;height:25.7px;background:#fff;border:1px solid #b6b4b0;border-radius:4px"></div>
<svg style="left:3305px;top:722px;" width="16" height="16" viewBox="0 0 16 16"><circle cx="6.5" cy="6.5" r="4.5" stroke="#3a3a3a" stroke-width="1.8" fill="none"/><path d="M10 10 L14 14" stroke="#3a3a3a" stroke-width="2"/></svg>
<div style="left:3324px;top:720.5px;font-size:15px;line-height:20px;color:#333;font-family:'Liberation Sans', sans-serif;white-space:pre;">crash</div>
<svg style="left:3542px;top:724px;" width="18" height="14" viewBox="0 0 18 14"><path d="M5 1h12v12H5L0 7z" fill="#3a3a3a"/><path d="M8 4l6 6M14 4l-6 6" stroke="#fff" stroke-width="1.5"/></svg>
<div style="left:3566px;top:718px;width:1px;height:25px;background:#c6c4c0"></div>
<div style="left:3594px;top:718px;width:1px;height:25px;background:#c6c4c0"></div>
<svg style="left:3571px;top:724px;" width="18" height="12" viewBox="0 0 18 12"><path d="M3 9 L9 3 L15 9" stroke="#333" stroke-width="1.7" fill="none"/></svg>
<svg style="left:3599px;top:724px;" width="18" height="12" viewBox="0 0 18 12"><path d="M3 3 L9 9 L15 3" stroke="#333" stroke-width="1.7" fill="none"/></svg>
<svg style="left:4191px;top:725px;" width="8" height="8" viewBox="0 0 8 8"><path d="M1 1l6 6M7 1L1 7" stroke="#555" stroke-width="1.2"/></svg>
<div style="left:3308.6px;top:758.7px;width:596.4px;height:671.3px;background:#fff;box-shadow:0 0 2px rgba(0,0,0,.25)"></div>
<svg style="left:3525.4px;top:937.4px;" width="163" height="120" viewBox="0 0 163 120"><rect x="1.5" y="1" width="160" height="118" rx="9" fill="#f3f3de" stroke="#6f6f6f" stroke-width="1.3"/><path d="M6.4 60.2h38.8v11.8H30.6v35H19.3v-35H6.4z" fill="#808184"/><path d="M122.8 60h11.3v35.8h21v11.2h-32.3z" fill="#6b6c6f"/><path d="M51.6 26.9 L56.7 27.4 L56.7 31.6 L51.6 32.1 L50.5 36.2 L54.7 39.1 L52.6 42.8 L47.9 40.6 L44.9 43.6 L47.1 48.3 L43.4 50.4 L40.5 46.2 L36.4 47.3 L35.9 52.4 L31.7 52.4 L31.2 47.3 L27.1 46.2 L24.2 50.4 L20.5 48.3 L22.7 43.6 L19.7 40.6 L15.0 42.8 L12.9 39.1 L17.1 36.2 L16.0 32.1 L10.9 31.6 L10.9 27.4 L16.0 26.9 L17.1 22.8 L12.9 19.9 L15.0 16.2 L19.7 18.4 L22.7 15.4 L20.5 10.7 L24.2 8.6 L27.1 12.8 L31.2 11.7 L31.7 6.6 L35.9 6.6 L36.4 11.7 L40.5 12.8 L43.4 8.6 L47.1 10.7 L44.9 15.4 L47.9 18.4 L52.6 16.2 L54.7 19.9 L50.5 22.8Z M42.8 29.5 A9 9 0 1 0 24.799999999999997 29.5 A9 9 0 1 0 42.8 29.5Z" fill="#5f6062" fill-rule="evenodd"/><path d="M33.8 29.5 L58.8 20.5 L58.8 38.5Z" fill="#f3f3de"/><path d="M135.7 25.3 L140.8 25.8 L140.8 30.0 L135.7 30.5 L134.6 34.6 L138.8 37.5 L136.7 41.2 L132.0 39.0 L129.0 42.0 L131.2 46.7 L127.5 48.8 L124.6 44.6 L120.5 45.7 L120.0 50.8 L115.8 50.8 L115.3 45.7 L111.2 44.6 L108.3 48.8 L104.6 46.7 L106.8 42.0 L103.8 39.0 L99.1 41.2 L97.0 37.5 L101.2 34.6 L100.1 30.5 L95.0 30.0 L95.0 25.8 L100.1 25.3 L101.2 21.2 L97.0 18.3 L99.1 14.6 L103.8 16.8 L106.8 13.8 L104.6 9.1 L108.3 7.0 L111.2 11.2 L115.3 10.1 L115.8 5.0 L120.0 5.0 L120.5 10.1 L124.6 11.2 L127.5 7.0 L131.2 9.1 L129.0 13.8 L132.0 16.8 L136.7 14.6 L138.8 18.3 L134.6 21.2Z M126.9 27.9 A9 9 0 1 0 108.9 27.9 A9 9 0 1 0 126.9 27.9Z" fill="#838487" fill-rule="evenodd"/><path d="M117.9 27.9h14v5h-14z" fill="#838487"/><path d="M121 18h16v9h-16z" fill="#f3f3de"/><path d="M116.3 77.0 L121.4 77.5 L121.4 81.7 L116.3 82.2 L115.2 86.3 L119.4 89.2 L117.3 92.9 L112.6 90.7 L109.6 93.7 L111.8 98.4 L108.1 100.5 L105.2 96.3 L101.1 97.4 L100.6 102.5 L96.4 102.5 L95.9 97.4 L91.8 96.3 L88.9 100.5 L85.2 98.4 L87.4 93.7 L84.4 90.7 L79.7 92.9 L77.6 89.2 L81.8 86.3 L80.7 82.2 L75.6 81.7 L75.6 77.5 L80.7 77.0 L81.8 72.9 L77.6 70.0 L79.7 66.3 L84.4 68.5 L87.4 65.5 L85.2 60.8 L88.9 58.7 L91.8 62.9 L95.9 61.8 L96.4 56.7 L100.6 56.7 L101.1 61.8 L105.2 62.9 L108.1 58.7 L111.8 60.8 L109.6 65.5 L112.6 68.5 L117.3 66.3 L119.4 70.0 L115.2 72.9Z M107.5 79.6 A9 9 0 1 0 89.5 79.6 A9 9 0 1 0 107.5 79.6Z" fill="#a9aaac" fill-rule="evenodd"/><path d="M68.4 86.9 L73.5 87.3 L73.5 91.3 L68.4 91.7 L67.4 95.6 L71.6 98.5 L69.6 102.0 L65.0 99.8 L62.1 102.7 L64.3 107.3 L60.8 109.3 L57.9 105.1 L54.0 106.1 L53.6 111.2 L49.6 111.2 L49.2 106.1 L45.3 105.1 L42.4 109.3 L38.9 107.3 L41.1 102.7 L38.2 99.8 L33.6 102.0 L31.6 98.5 L35.8 95.6 L34.8 91.7 L29.7 91.3 L29.7 87.3 L34.8 86.9 L35.8 83.0 L31.6 80.1 L33.6 76.6 L38.2 78.8 L41.1 75.9 L38.9 71.3 L42.4 69.3 L45.3 73.5 L49.2 72.5 L49.6 67.4 L53.6 67.4 L54.0 72.5 L57.9 73.5 L60.8 69.3 L64.3 71.3 L62.1 75.9 L65.0 78.8 L69.6 76.6 L71.6 80.1 L67.4 83.0Z M60.6 89.3 A9 9 0 1 0 42.6 89.3 A9 9 0 1 0 60.6 89.3Z" fill="#a97150" fill-rule="evenodd"/><path d="M92.7 36.8 L97.8 37.2 L97.8 41.2 L92.7 41.6 L91.7 45.5 L95.9 48.4 L93.9 51.9 L89.3 49.7 L86.4 52.6 L88.6 57.2 L85.1 59.2 L82.2 55.0 L78.3 56.0 L77.9 61.1 L73.9 61.1 L73.5 56.0 L69.6 55.0 L66.7 59.2 L63.2 57.2 L65.4 52.6 L62.5 49.7 L57.9 51.9 L55.9 48.4 L60.1 45.5 L59.1 41.6 L54.0 41.2 L54.0 37.2 L59.1 36.8 L60.1 32.9 L55.9 30.0 L57.9 26.5 L62.5 28.7 L65.4 25.8 L63.2 21.2 L66.7 19.2 L69.6 23.4 L73.5 22.4 L73.9 17.3 L77.9 17.3 L78.3 22.4 L82.2 23.4 L85.1 19.2 L88.6 21.2 L86.4 25.8 L89.3 28.7 L93.9 26.5 L95.9 30.0 L91.7 32.9Z M84.9 39.2 A9 9 0 1 0 66.9 39.2 A9 9 0 1 0 84.9 39.2Z" fill="#f39019" fill-rule="evenodd"/></svg>
<div id="f86" style="left:3437.8px;top:1082.9px;font-size:33px;line-height:43px;color:#000;font-family:'Liberation Sans', sans-serif;font-weight:bold;transform:scaleX(1.0677);transform-origin:0 0;white-space:pre;">CogTool User Guide</div>
<div id="f87" style="left:3554.8px;top:1149.3px;font-size:19px;line-height:25px;color:#000;font-family:'Liberation Sans', sans-serif;font-weight:bold;transform:scaleX(1.0364);transform-origin:0 0;white-space:pre;">Version 1.2</div>
<div id="f88" style="left:3570.8px;top:1186.6px;font-size:11px;line-height:14px;color:#000;font-family:'Liberation Sans', sans-serif;font-weight:bold;transform:scaleX(1.0701);transform-origin:0 0;white-space:pre;">May 23, 2012</div>
<div id="f89" style="left:3567.1000000000004px;top:1267.1px;font-size:11.5px;line-height:15px;color:#000;font-family:'Liberation Sans', sans-serif;transform:scaleX(1.0177);transform-origin:0 0;white-space:pre;">Bonnie E. John</div>
<div id="f90" style="left:3515.8px;top:1294.5px;font-size:11.5px;line-height:15px;color:#000;font-family:'Liberation Sans', sans-serif;transform:scaleX(1.0317);transform-origin:0 0;white-space:pre;">IBM T. J. Watson Research Center</div>
<div id="f91" style="left:3551.8px;top:1308.0px;font-size:11.5px;line-height:15px;color:#000;font-family:'Liberation Sans', sans-serif;transform:scaleX(1.0184);transform-origin:0 0;white-space:pre;">Software Productivity</div>
<div id="f92" style="left:3505.8px;top:1321.2px;font-size:11.5px;line-height:15px;color:#000;font-family:'Liberation Sans', sans-serif;transform:scaleX(1.0139);transform-origin:0 0;white-space:pre;">19 Skyline Drive, Hawthorne NY 10532</div>
<div id="f93" style="left:3563.3px;top:1348.3px;font-size:11.5px;line-height:15px;color:#000;font-family:'Liberation Sans', sans-serif;transform:scaleX(1.0155);transform-origin:0 0;white-space:pre;">http://cogtool.org</div></body></html>
